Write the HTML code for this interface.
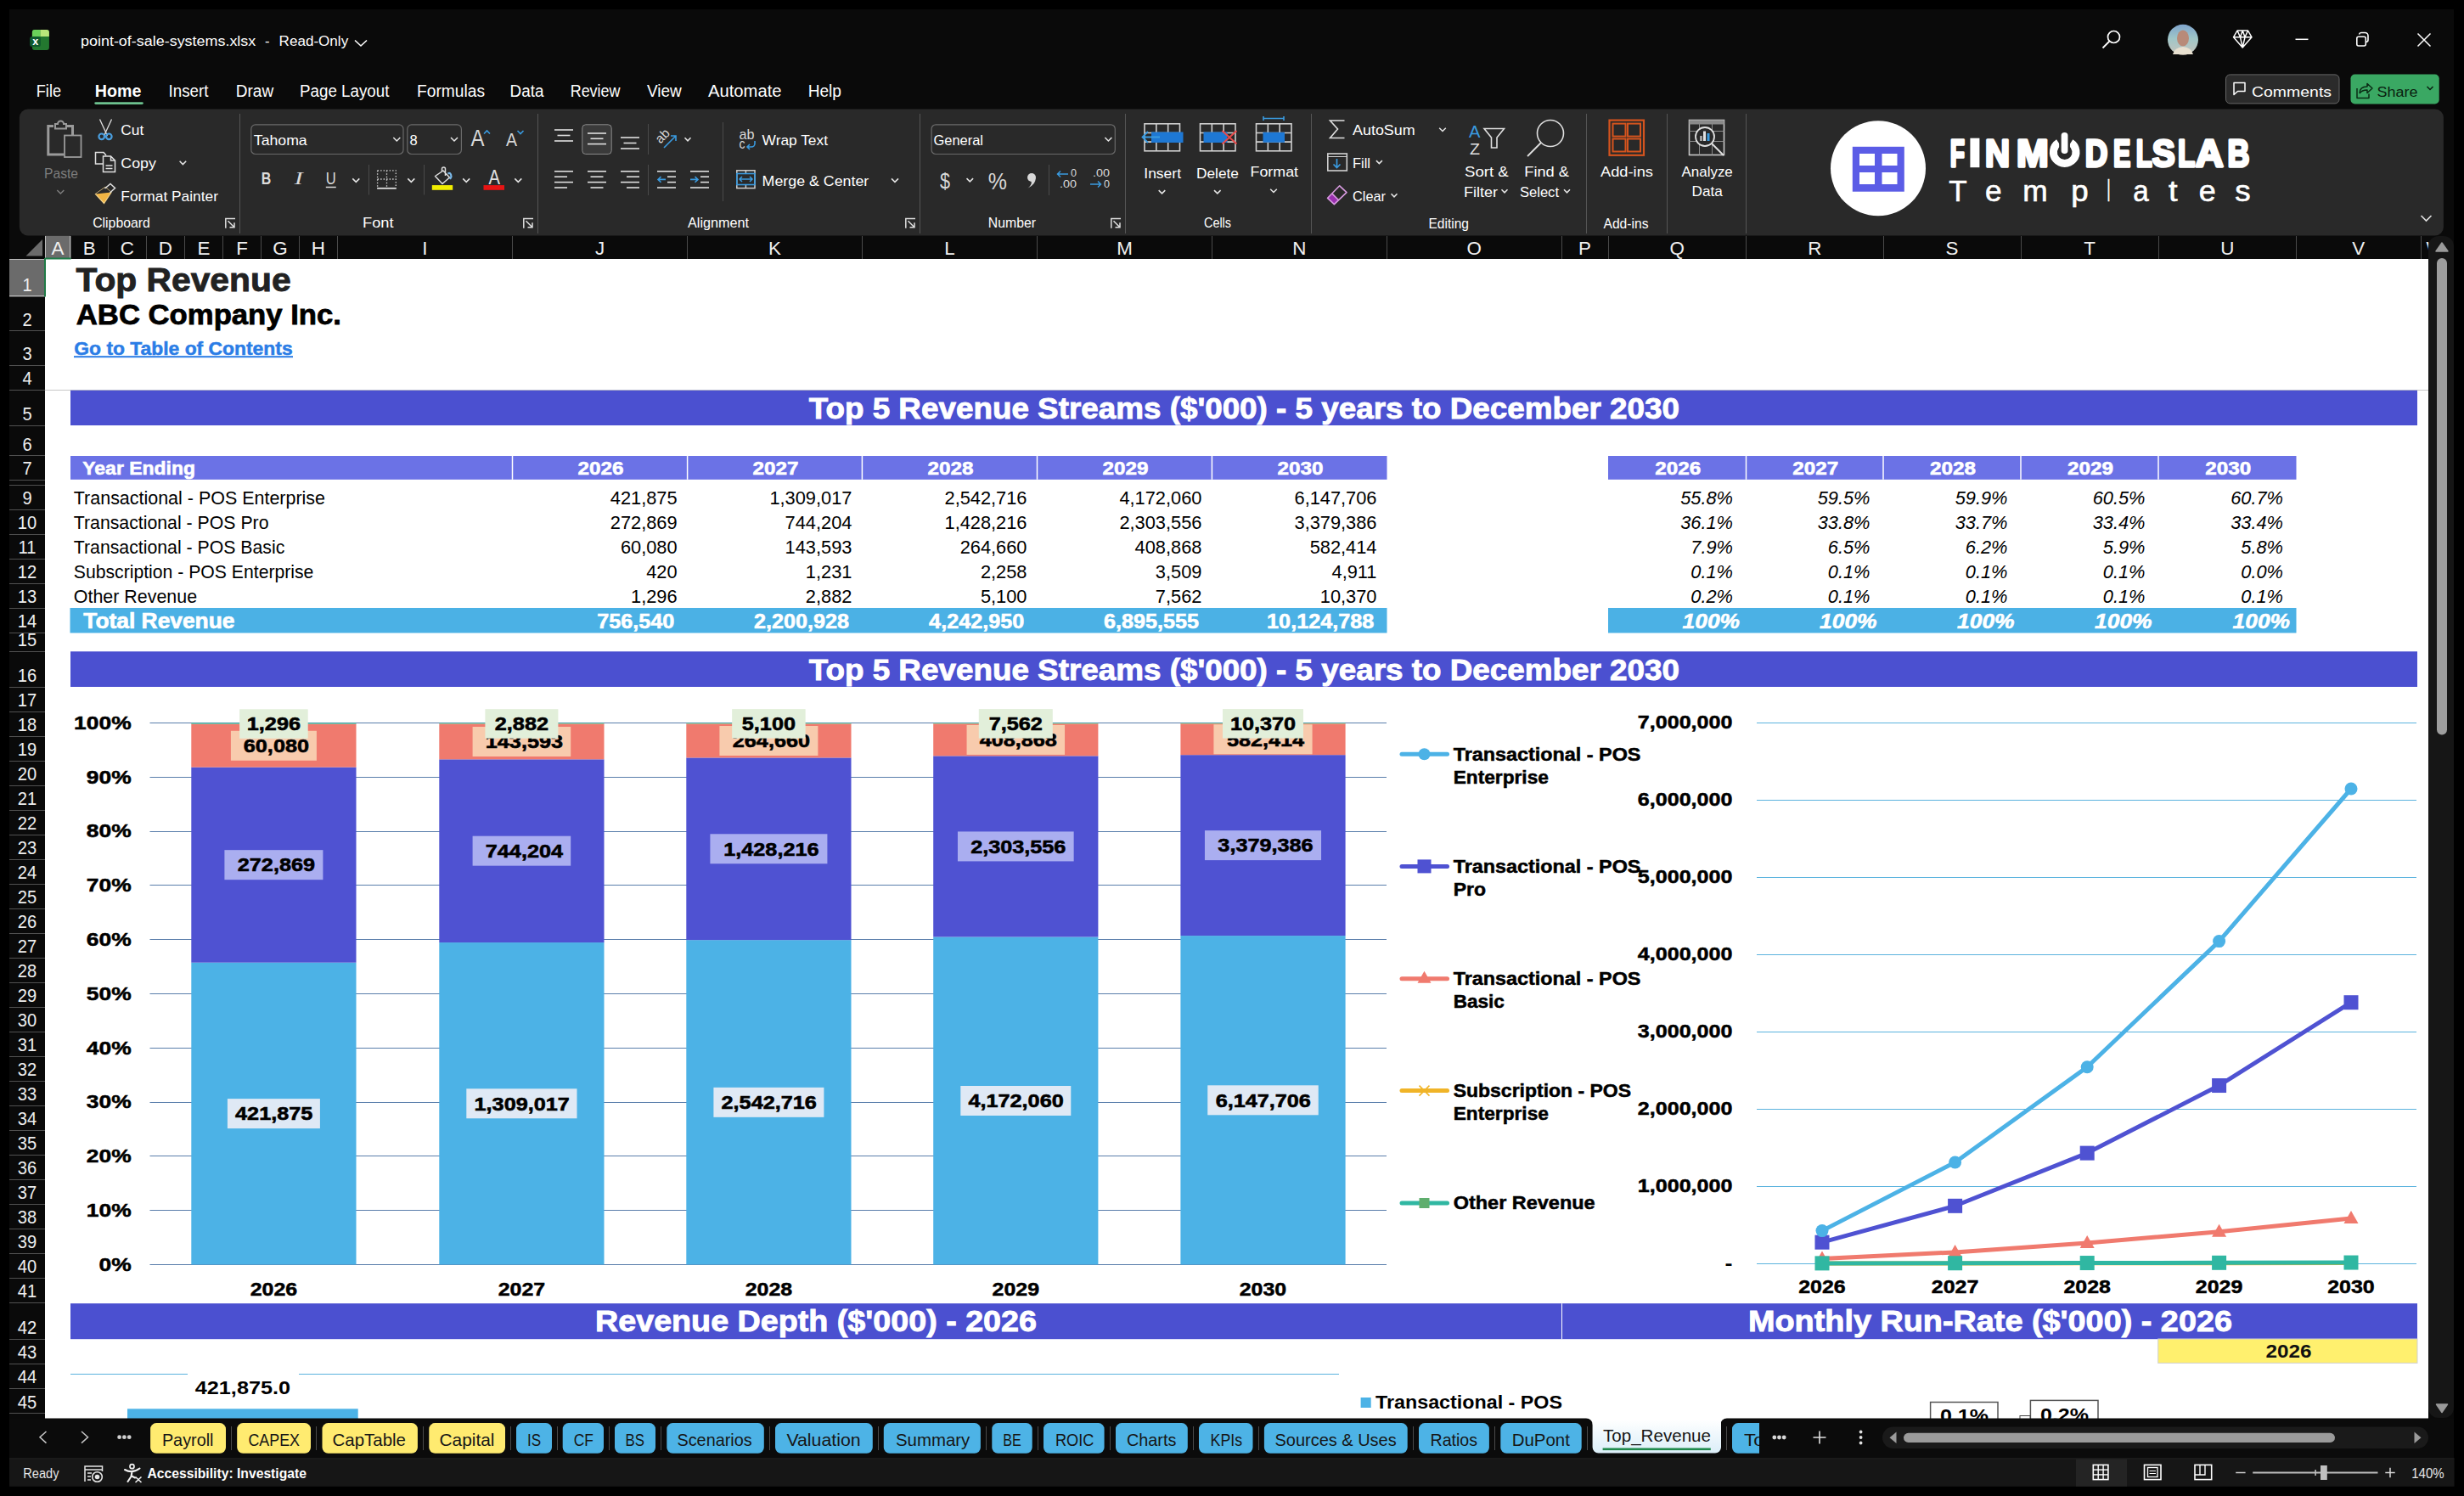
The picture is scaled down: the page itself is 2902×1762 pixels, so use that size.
<!DOCTYPE html><html><head><meta charset="utf-8"><style>html,body{margin:0;padding:0;background:#000;overflow:hidden}svg{display:block}text{font-family:"Liberation Sans",sans-serif;white-space:pre}</style></head><body>
<svg width="2902" height="1762" viewBox="0 0 2902 1762">
<rect x="0.00" y="0.00" width="2902.00" height="1762.00" fill="#000" />
<rect x="11.00" y="11.00" width="2879.00" height="1740.00" fill="#0a0a0a" />
<rect x="53.00" y="305.00" width="2807.00" height="1375.00" fill="#ffffff" />
<rect x="11.00" y="277.00" width="2849.00" height="28.00" fill="#0a0a0a" />
<polygon points="50,282 50,301.5 30.5,301.5" fill="#6b6b6b"/>
<rect x="53.00" y="277.50" width="30.00" height="27.50" fill="#6b6b6b" />
<line x1="83.50" y1="278.00" x2="83.50" y2="305.00" stroke="#4a4a4a" stroke-width="1" />
<text x="60.53" y="299.80" font-size="22.38" fill="#f0f0f0" >A</text>
<line x1="127.50" y1="278.00" x2="127.50" y2="305.00" stroke="#4a4a4a" stroke-width="1" />
<text x="97.68" y="299.80" font-size="22.38" fill="#f0f0f0" >B</text>
<line x1="172.50" y1="278.00" x2="172.50" y2="305.00" stroke="#4a4a4a" stroke-width="1" />
<text x="141.82" y="299.80" font-size="22.38" fill="#f0f0f0" >C</text>
<line x1="217.50" y1="278.00" x2="217.50" y2="305.00" stroke="#4a4a4a" stroke-width="1" />
<text x="186.82" y="299.80" font-size="22.38" fill="#f0f0f0" >D</text>
<line x1="262.50" y1="278.00" x2="262.50" y2="305.00" stroke="#4a4a4a" stroke-width="1" />
<text x="232.43" y="299.80" font-size="22.38" fill="#f0f0f0" >E</text>
<line x1="307.50" y1="278.00" x2="307.50" y2="305.00" stroke="#4a4a4a" stroke-width="1" />
<text x="278.21" y="299.80" font-size="22.38" fill="#f0f0f0" >F</text>
<line x1="352.50" y1="278.00" x2="352.50" y2="305.00" stroke="#4a4a4a" stroke-width="1" />
<text x="321.34" y="299.80" font-size="22.38" fill="#f0f0f0" >G</text>
<line x1="397.50" y1="278.00" x2="397.50" y2="305.00" stroke="#4a4a4a" stroke-width="1" />
<text x="366.82" y="299.80" font-size="22.38" fill="#f0f0f0" >H</text>
<line x1="603.50" y1="278.00" x2="603.50" y2="305.00" stroke="#4a4a4a" stroke-width="1" />
<text x="497.29" y="299.80" font-size="22.38" fill="#f0f0f0" >I</text>
<line x1="809.50" y1="278.00" x2="809.50" y2="305.00" stroke="#4a4a4a" stroke-width="1" />
<text x="700.95" y="299.80" font-size="22.38" fill="#f0f0f0" >J</text>
<line x1="1015.50" y1="278.00" x2="1015.50" y2="305.00" stroke="#4a4a4a" stroke-width="1" />
<text x="905.03" y="299.80" font-size="22.38" fill="#f0f0f0" >K</text>
<line x1="1221.50" y1="278.00" x2="1221.50" y2="305.00" stroke="#4a4a4a" stroke-width="1" />
<text x="1112.23" y="299.80" font-size="22.38" fill="#f0f0f0" >L</text>
<line x1="1427.50" y1="278.00" x2="1427.50" y2="305.00" stroke="#4a4a4a" stroke-width="1" />
<text x="1315.13" y="299.80" font-size="22.38" fill="#f0f0f0" >M</text>
<line x1="1633.50" y1="278.00" x2="1633.50" y2="305.00" stroke="#4a4a4a" stroke-width="1" />
<text x="1522.37" y="299.80" font-size="22.38" fill="#f0f0f0" >N</text>
<line x1="1839.50" y1="278.00" x2="1839.50" y2="305.00" stroke="#4a4a4a" stroke-width="1" />
<text x="1727.54" y="299.80" font-size="22.38" fill="#f0f0f0" >O</text>
<line x1="1894.50" y1="278.00" x2="1894.50" y2="305.00" stroke="#4a4a4a" stroke-width="1" />
<text x="1859.03" y="299.80" font-size="22.38" fill="#f0f0f0" >P</text>
<line x1="2056.50" y1="278.00" x2="2056.50" y2="305.00" stroke="#4a4a4a" stroke-width="1" />
<text x="1966.54" y="299.80" font-size="22.38" fill="#f0f0f0" >Q</text>
<line x1="2218.50" y1="278.00" x2="2218.50" y2="305.00" stroke="#4a4a4a" stroke-width="1" />
<text x="2129.17" y="299.80" font-size="22.38" fill="#f0f0f0" >R</text>
<line x1="2380.50" y1="278.00" x2="2380.50" y2="305.00" stroke="#4a4a4a" stroke-width="1" />
<text x="2291.53" y="299.80" font-size="22.38" fill="#f0f0f0" >S</text>
<line x1="2542.50" y1="278.00" x2="2542.50" y2="305.00" stroke="#4a4a4a" stroke-width="1" />
<text x="2454.16" y="299.80" font-size="22.38" fill="#f0f0f0" >T</text>
<line x1="2704.50" y1="278.00" x2="2704.50" y2="305.00" stroke="#4a4a4a" stroke-width="1" />
<text x="2615.17" y="299.80" font-size="22.38" fill="#f0f0f0" >U</text>
<line x1="2851.50" y1="278.00" x2="2851.50" y2="305.00" stroke="#4a4a4a" stroke-width="1" />
<text x="2770.28" y="299.80" font-size="22.38" fill="#f0f0f0" >V</text>
<text x="2857.44" y="299.80" font-size="22.38" fill="#f0f0f0" >W</text>
<line x1="53.50" y1="278.00" x2="53.50" y2="305.00" stroke="#bdbdbd" stroke-width="1" />
<line x1="82.50" y1="278.00" x2="82.50" y2="305.00" stroke="#bdbdbd" stroke-width="1" />
<rect x="11.00" y="305.00" width="42.00" height="1365.00" fill="#0a0a0a" />
<rect x="11.00" y="305.50" width="41.50" height="43.20" fill="#6b6b6b" />
<line x1="11.00" y1="349.50" x2="53.00" y2="349.50" stroke="#505050" stroke-width="1" />
<text x="26.40" y="343.00" font-size="22.38" fill="#eeeeee" textLength="11.20" lengthAdjust="spacingAndGlyphs" >1</text>
<line x1="11.00" y1="389.50" x2="53.00" y2="389.50" stroke="#505050" stroke-width="1" />
<text x="26.40" y="383.50" font-size="22.38" fill="#eeeeee" textLength="11.20" lengthAdjust="spacingAndGlyphs" >2</text>
<line x1="11.00" y1="430.50" x2="53.00" y2="430.50" stroke="#505050" stroke-width="1" />
<text x="26.40" y="424.40" font-size="22.38" fill="#eeeeee" textLength="11.20" lengthAdjust="spacingAndGlyphs" >3</text>
<line x1="11.00" y1="459.50" x2="53.00" y2="459.50" stroke="#505050" stroke-width="1" />
<text x="26.40" y="453.30" font-size="22.38" fill="#eeeeee" textLength="11.20" lengthAdjust="spacingAndGlyphs" >4</text>
<line x1="11.00" y1="501.50" x2="53.00" y2="501.50" stroke="#505050" stroke-width="1" />
<text x="26.40" y="495.40" font-size="22.38" fill="#eeeeee" textLength="11.20" lengthAdjust="spacingAndGlyphs" >5</text>
<line x1="11.00" y1="536.50" x2="53.00" y2="536.50" stroke="#505050" stroke-width="1" />
<text x="26.40" y="530.60" font-size="22.38" fill="#eeeeee" textLength="11.20" lengthAdjust="spacingAndGlyphs" >6</text>
<line x1="11.00" y1="565.50" x2="53.00" y2="565.50" stroke="#505050" stroke-width="1" />
<text x="26.40" y="559.00" font-size="22.38" fill="#eeeeee" textLength="11.20" lengthAdjust="spacingAndGlyphs" >7</text>
<line x1="11.00" y1="571.50" x2="53.00" y2="571.50" stroke="#505050" stroke-width="1" />
<line x1="11.00" y1="600.50" x2="53.00" y2="600.50" stroke="#505050" stroke-width="1" />
<text x="26.40" y="594.20" font-size="22.38" fill="#eeeeee" textLength="11.20" lengthAdjust="spacingAndGlyphs" >9</text>
<line x1="11.00" y1="629.50" x2="53.00" y2="629.50" stroke="#505050" stroke-width="1" />
<text x="20.80" y="623.00" font-size="22.38" fill="#eeeeee" textLength="22.41" lengthAdjust="spacingAndGlyphs" >10</text>
<line x1="11.00" y1="658.50" x2="53.00" y2="658.50" stroke="#505050" stroke-width="1" />
<text x="21.54" y="652.00" font-size="22.38" fill="#eeeeee" textLength="20.91" lengthAdjust="spacingAndGlyphs" >11</text>
<line x1="11.00" y1="687.50" x2="53.00" y2="687.50" stroke="#505050" stroke-width="1" />
<text x="20.80" y="681.30" font-size="22.38" fill="#eeeeee" textLength="22.41" lengthAdjust="spacingAndGlyphs" >12</text>
<line x1="11.00" y1="716.50" x2="53.00" y2="716.50" stroke="#505050" stroke-width="1" />
<text x="20.80" y="710.00" font-size="22.38" fill="#eeeeee" textLength="22.41" lengthAdjust="spacingAndGlyphs" >13</text>
<line x1="11.00" y1="745.50" x2="53.00" y2="745.50" stroke="#505050" stroke-width="1" />
<text x="20.80" y="739.00" font-size="22.38" fill="#eeeeee" textLength="22.41" lengthAdjust="spacingAndGlyphs" >14</text>
<line x1="11.00" y1="767.50" x2="53.00" y2="767.50" stroke="#505050" stroke-width="1" />
<text x="20.80" y="761.30" font-size="22.38" fill="#eeeeee" textLength="22.41" lengthAdjust="spacingAndGlyphs" >15</text>
<line x1="11.00" y1="809.50" x2="53.00" y2="809.50" stroke="#505050" stroke-width="1" />
<text x="20.80" y="803.00" font-size="22.38" fill="#eeeeee" textLength="22.41" lengthAdjust="spacingAndGlyphs" >16</text>
<line x1="11.00" y1="838.50" x2="53.00" y2="838.50" stroke="#505050" stroke-width="1" />
<text x="20.80" y="832.00" font-size="22.38" fill="#eeeeee" textLength="22.41" lengthAdjust="spacingAndGlyphs" >17</text>
<line x1="11.00" y1="867.50" x2="53.00" y2="867.50" stroke="#505050" stroke-width="1" />
<text x="20.80" y="861.00" font-size="22.38" fill="#eeeeee" textLength="22.41" lengthAdjust="spacingAndGlyphs" >18</text>
<line x1="11.00" y1="896.50" x2="53.00" y2="896.50" stroke="#505050" stroke-width="1" />
<text x="20.80" y="890.00" font-size="22.38" fill="#eeeeee" textLength="22.41" lengthAdjust="spacingAndGlyphs" >19</text>
<line x1="11.00" y1="925.50" x2="53.00" y2="925.50" stroke="#505050" stroke-width="1" />
<text x="20.80" y="919.00" font-size="22.38" fill="#eeeeee" textLength="22.41" lengthAdjust="spacingAndGlyphs" >20</text>
<line x1="11.00" y1="954.50" x2="53.00" y2="954.50" stroke="#505050" stroke-width="1" />
<text x="20.80" y="948.00" font-size="22.38" fill="#eeeeee" textLength="22.41" lengthAdjust="spacingAndGlyphs" >21</text>
<line x1="11.00" y1="983.50" x2="53.00" y2="983.50" stroke="#505050" stroke-width="1" />
<text x="20.80" y="977.00" font-size="22.38" fill="#eeeeee" textLength="22.41" lengthAdjust="spacingAndGlyphs" >22</text>
<line x1="11.00" y1="1012.50" x2="53.00" y2="1012.50" stroke="#505050" stroke-width="1" />
<text x="20.80" y="1006.00" font-size="22.38" fill="#eeeeee" textLength="22.41" lengthAdjust="spacingAndGlyphs" >23</text>
<line x1="11.00" y1="1041.50" x2="53.00" y2="1041.50" stroke="#505050" stroke-width="1" />
<text x="20.80" y="1035.00" font-size="22.38" fill="#eeeeee" textLength="22.41" lengthAdjust="spacingAndGlyphs" >24</text>
<line x1="11.00" y1="1070.50" x2="53.00" y2="1070.50" stroke="#505050" stroke-width="1" />
<text x="20.80" y="1064.00" font-size="22.38" fill="#eeeeee" textLength="22.41" lengthAdjust="spacingAndGlyphs" >25</text>
<line x1="11.00" y1="1099.50" x2="53.00" y2="1099.50" stroke="#505050" stroke-width="1" />
<text x="20.80" y="1093.00" font-size="22.38" fill="#eeeeee" textLength="22.41" lengthAdjust="spacingAndGlyphs" >26</text>
<line x1="11.00" y1="1128.50" x2="53.00" y2="1128.50" stroke="#505050" stroke-width="1" />
<text x="20.80" y="1122.00" font-size="22.38" fill="#eeeeee" textLength="22.41" lengthAdjust="spacingAndGlyphs" >27</text>
<line x1="11.00" y1="1157.50" x2="53.00" y2="1157.50" stroke="#505050" stroke-width="1" />
<text x="20.80" y="1151.00" font-size="22.38" fill="#eeeeee" textLength="22.41" lengthAdjust="spacingAndGlyphs" >28</text>
<line x1="11.00" y1="1186.50" x2="53.00" y2="1186.50" stroke="#505050" stroke-width="1" />
<text x="20.80" y="1180.00" font-size="22.38" fill="#eeeeee" textLength="22.41" lengthAdjust="spacingAndGlyphs" >29</text>
<line x1="11.00" y1="1215.50" x2="53.00" y2="1215.50" stroke="#505050" stroke-width="1" />
<text x="20.80" y="1209.00" font-size="22.38" fill="#eeeeee" textLength="22.41" lengthAdjust="spacingAndGlyphs" >30</text>
<line x1="11.00" y1="1244.50" x2="53.00" y2="1244.50" stroke="#505050" stroke-width="1" />
<text x="20.80" y="1238.00" font-size="22.38" fill="#eeeeee" textLength="22.41" lengthAdjust="spacingAndGlyphs" >31</text>
<line x1="11.00" y1="1273.50" x2="53.00" y2="1273.50" stroke="#505050" stroke-width="1" />
<text x="20.80" y="1267.00" font-size="22.38" fill="#eeeeee" textLength="22.41" lengthAdjust="spacingAndGlyphs" >32</text>
<line x1="11.00" y1="1302.50" x2="53.00" y2="1302.50" stroke="#505050" stroke-width="1" />
<text x="20.80" y="1296.00" font-size="22.38" fill="#eeeeee" textLength="22.41" lengthAdjust="spacingAndGlyphs" >33</text>
<line x1="11.00" y1="1331.50" x2="53.00" y2="1331.50" stroke="#505050" stroke-width="1" />
<text x="20.80" y="1325.00" font-size="22.38" fill="#eeeeee" textLength="22.41" lengthAdjust="spacingAndGlyphs" >34</text>
<line x1="11.00" y1="1360.50" x2="53.00" y2="1360.50" stroke="#505050" stroke-width="1" />
<text x="20.80" y="1354.00" font-size="22.38" fill="#eeeeee" textLength="22.41" lengthAdjust="spacingAndGlyphs" >35</text>
<line x1="11.00" y1="1389.50" x2="53.00" y2="1389.50" stroke="#505050" stroke-width="1" />
<text x="20.80" y="1383.00" font-size="22.38" fill="#eeeeee" textLength="22.41" lengthAdjust="spacingAndGlyphs" >36</text>
<line x1="11.00" y1="1418.50" x2="53.00" y2="1418.50" stroke="#505050" stroke-width="1" />
<text x="20.80" y="1412.00" font-size="22.38" fill="#eeeeee" textLength="22.41" lengthAdjust="spacingAndGlyphs" >37</text>
<line x1="11.00" y1="1447.50" x2="53.00" y2="1447.50" stroke="#505050" stroke-width="1" />
<text x="20.80" y="1441.00" font-size="22.38" fill="#eeeeee" textLength="22.41" lengthAdjust="spacingAndGlyphs" >38</text>
<line x1="11.00" y1="1476.50" x2="53.00" y2="1476.50" stroke="#505050" stroke-width="1" />
<text x="20.80" y="1470.00" font-size="22.38" fill="#eeeeee" textLength="22.41" lengthAdjust="spacingAndGlyphs" >39</text>
<line x1="11.00" y1="1505.50" x2="53.00" y2="1505.50" stroke="#505050" stroke-width="1" />
<text x="20.80" y="1499.00" font-size="22.38" fill="#eeeeee" textLength="22.41" lengthAdjust="spacingAndGlyphs" >40</text>
<line x1="11.00" y1="1534.50" x2="53.00" y2="1534.50" stroke="#505050" stroke-width="1" />
<text x="20.80" y="1528.00" font-size="22.38" fill="#eeeeee" textLength="22.41" lengthAdjust="spacingAndGlyphs" >41</text>
<line x1="11.00" y1="1577.50" x2="53.00" y2="1577.50" stroke="#505050" stroke-width="1" />
<text x="20.80" y="1571.00" font-size="22.38" fill="#eeeeee" textLength="22.41" lengthAdjust="spacingAndGlyphs" >42</text>
<line x1="11.00" y1="1606.50" x2="53.00" y2="1606.50" stroke="#505050" stroke-width="1" />
<text x="20.80" y="1600.00" font-size="22.38" fill="#eeeeee" textLength="22.41" lengthAdjust="spacingAndGlyphs" >43</text>
<line x1="11.00" y1="1635.50" x2="53.00" y2="1635.50" stroke="#505050" stroke-width="1" />
<text x="20.80" y="1629.00" font-size="22.38" fill="#eeeeee" textLength="22.41" lengthAdjust="spacingAndGlyphs" >44</text>
<line x1="11.00" y1="1664.50" x2="53.00" y2="1664.50" stroke="#505050" stroke-width="1" />
<text x="20.80" y="1658.50" font-size="22.38" fill="#eeeeee" textLength="22.41" lengthAdjust="spacingAndGlyphs" >45</text>
<line x1="11.00" y1="305.50" x2="53.00" y2="305.50" stroke="#bdbdbd" stroke-width="1" />
<line x1="11.00" y1="348.50" x2="53.00" y2="348.50" stroke="#bdbdbd" stroke-width="1" />
<line x1="53.00" y1="304.50" x2="83.50" y2="304.50" stroke="#1f7a47" stroke-width="2" />
<line x1="53.00" y1="304.00" x2="53.00" y2="349.50" stroke="#1f7a47" stroke-width="2" />
<line x1="53.00" y1="459.50" x2="2860.00" y2="459.50" stroke="#c7c7c7" stroke-width="1" />
<text x="89.50" y="342.70" font-size="39.68" fill="#222222" font-weight="bold" textLength="253.08" lengthAdjust="spacingAndGlyphs" stroke="#222222" stroke-width="0.9" >Top Revenue</text>
<text x="89.80" y="381.90" font-size="34.01" fill="#000000" font-weight="bold" textLength="312.20" lengthAdjust="spacingAndGlyphs" stroke="#000000" stroke-width="0.8" >ABC Company Inc.</text>
<text x="87.30" y="417.70" font-size="21.95" fill="#2b7de6" font-weight="bold" textLength="257.31" lengthAdjust="spacingAndGlyphs" stroke="#2b7de6" stroke-width="0.5" >Go to Table of Contents</text>
<rect x="87.00" y="419.20" width="258.00" height="2.00" fill="#2b7de6" />
<rect x="83.00" y="459.80" width="2764.00" height="41.20" fill="#4b50d0" />
<text x="952.70" y="492.60" font-size="34.59" fill="#fff" font-weight="bold" textLength="1025.30" lengthAdjust="spacingAndGlyphs" stroke="#fff" stroke-width="0.9" >Top 5 Revenue Streams ($'000) - 5 years to December 2030</text>
<rect x="83.00" y="537.00" width="1550.50" height="27.80" fill="#6b72e6" />
<line x1="603.50" y1="537.00" x2="603.50" y2="564.80" stroke="#ffffff" stroke-width="1.5" />
<line x1="809.60" y1="537.00" x2="809.60" y2="564.80" stroke="#ffffff" stroke-width="1.5" />
<line x1="1015.40" y1="537.00" x2="1015.40" y2="564.80" stroke="#ffffff" stroke-width="1.5" />
<line x1="1221.50" y1="537.00" x2="1221.50" y2="564.80" stroke="#ffffff" stroke-width="1.5" />
<line x1="1427.40" y1="537.00" x2="1427.40" y2="564.80" stroke="#ffffff" stroke-width="1.5" />
<text x="97.30" y="559.40" font-size="22.67" fill="#fff" font-weight="bold" textLength="132.71" lengthAdjust="spacingAndGlyphs" stroke="#fff" stroke-width="0.6" >Year Ending</text>
<text x="680.55" y="559.40" font-size="22.67" fill="#fff" font-weight="bold" textLength="54.00" lengthAdjust="spacingAndGlyphs" stroke="#fff" stroke-width="0.6" >2026</text>
<text x="886.50" y="559.40" font-size="22.67" fill="#fff" font-weight="bold" textLength="54.00" lengthAdjust="spacingAndGlyphs" stroke="#fff" stroke-width="0.6" >2027</text>
<text x="1092.45" y="559.40" font-size="22.67" fill="#fff" font-weight="bold" textLength="54.00" lengthAdjust="spacingAndGlyphs" stroke="#fff" stroke-width="0.6" >2028</text>
<text x="1298.45" y="559.40" font-size="22.67" fill="#fff" font-weight="bold" textLength="54.00" lengthAdjust="spacingAndGlyphs" stroke="#fff" stroke-width="0.6" >2029</text>
<text x="1504.45" y="559.40" font-size="22.67" fill="#fff" font-weight="bold" textLength="54.00" lengthAdjust="spacingAndGlyphs" stroke="#fff" stroke-width="0.6" >2030</text>
<rect x="1894.00" y="537.00" width="810.50" height="27.80" fill="#6b72e6" />
<line x1="2056.50" y1="537.00" x2="2056.50" y2="564.80" stroke="#ffffff" stroke-width="1.5" />
<line x1="2218.00" y1="537.00" x2="2218.00" y2="564.80" stroke="#ffffff" stroke-width="1.5" />
<line x1="2380.00" y1="537.00" x2="2380.00" y2="564.80" stroke="#ffffff" stroke-width="1.5" />
<line x1="2542.00" y1="537.00" x2="2542.00" y2="564.80" stroke="#ffffff" stroke-width="1.5" />
<text x="1949.25" y="558.80" font-size="22.67" fill="#fff" font-weight="bold" textLength="54.00" lengthAdjust="spacingAndGlyphs" stroke="#fff" stroke-width="0.6" >2026</text>
<text x="2111.25" y="558.80" font-size="22.67" fill="#fff" font-weight="bold" textLength="54.00" lengthAdjust="spacingAndGlyphs" stroke="#fff" stroke-width="0.6" >2027</text>
<text x="2273.00" y="558.80" font-size="22.67" fill="#fff" font-weight="bold" textLength="54.00" lengthAdjust="spacingAndGlyphs" stroke="#fff" stroke-width="0.6" >2028</text>
<text x="2435.00" y="558.80" font-size="22.67" fill="#fff" font-weight="bold" textLength="54.00" lengthAdjust="spacingAndGlyphs" stroke="#fff" stroke-width="0.6" >2029</text>
<text x="2597.25" y="558.80" font-size="22.67" fill="#fff" font-weight="bold" textLength="54.00" lengthAdjust="spacingAndGlyphs" stroke="#fff" stroke-width="0.6" >2030</text>
<text x="86.80" y="593.80" font-size="22.38" fill="#000" textLength="296.20" lengthAdjust="spacingAndGlyphs" >Transactional - POS Enterprise</text>
<text x="718.80" y="593.80" font-size="21.80" fill="#000" textLength="78.80" lengthAdjust="spacingAndGlyphs" >421,875</text>
<text x="906.42" y="593.80" font-size="21.80" fill="#000" textLength="96.98" lengthAdjust="spacingAndGlyphs" >1,309,017</text>
<text x="1112.52" y="593.80" font-size="21.80" fill="#000" textLength="96.98" lengthAdjust="spacingAndGlyphs" >2,542,716</text>
<text x="1318.42" y="593.80" font-size="21.80" fill="#000" textLength="96.98" lengthAdjust="spacingAndGlyphs" >4,172,060</text>
<text x="1524.52" y="593.80" font-size="21.80" fill="#000" textLength="96.98" lengthAdjust="spacingAndGlyphs" >6,147,706</text>
<text x="1979.18" y="594.30" font-size="21.80" fill="#000" font-style="italic" textLength="61.82" lengthAdjust="spacingAndGlyphs" >55.8%</text>
<text x="2140.68" y="594.30" font-size="21.80" fill="#000" font-style="italic" textLength="61.82" lengthAdjust="spacingAndGlyphs" >59.5%</text>
<text x="2302.68" y="594.30" font-size="21.80" fill="#000" font-style="italic" textLength="61.82" lengthAdjust="spacingAndGlyphs" >59.9%</text>
<text x="2464.68" y="594.30" font-size="21.80" fill="#000" font-style="italic" textLength="61.82" lengthAdjust="spacingAndGlyphs" >60.5%</text>
<text x="2627.18" y="594.30" font-size="21.80" fill="#000" font-style="italic" textLength="61.82" lengthAdjust="spacingAndGlyphs" >60.7%</text>
<text x="86.80" y="622.75" font-size="22.38" fill="#000" textLength="229.71" lengthAdjust="spacingAndGlyphs" >Transactional - POS Pro</text>
<text x="718.80" y="622.75" font-size="21.80" fill="#000" textLength="78.80" lengthAdjust="spacingAndGlyphs" >272,869</text>
<text x="924.60" y="622.75" font-size="21.80" fill="#000" textLength="78.80" lengthAdjust="spacingAndGlyphs" >744,204</text>
<text x="1112.52" y="622.75" font-size="21.80" fill="#000" textLength="96.98" lengthAdjust="spacingAndGlyphs" >1,428,216</text>
<text x="1318.42" y="622.75" font-size="21.80" fill="#000" textLength="96.98" lengthAdjust="spacingAndGlyphs" >2,303,556</text>
<text x="1524.52" y="622.75" font-size="21.80" fill="#000" textLength="96.98" lengthAdjust="spacingAndGlyphs" >3,379,386</text>
<text x="1979.18" y="623.25" font-size="21.80" fill="#000" font-style="italic" textLength="61.82" lengthAdjust="spacingAndGlyphs" >36.1%</text>
<text x="2140.68" y="623.25" font-size="21.80" fill="#000" font-style="italic" textLength="61.82" lengthAdjust="spacingAndGlyphs" >33.8%</text>
<text x="2302.68" y="623.25" font-size="21.80" fill="#000" font-style="italic" textLength="61.82" lengthAdjust="spacingAndGlyphs" >33.7%</text>
<text x="2464.68" y="623.25" font-size="21.80" fill="#000" font-style="italic" textLength="61.82" lengthAdjust="spacingAndGlyphs" >33.4%</text>
<text x="2627.18" y="623.25" font-size="21.80" fill="#000" font-style="italic" textLength="61.82" lengthAdjust="spacingAndGlyphs" >33.4%</text>
<text x="86.80" y="651.70" font-size="22.38" fill="#000" textLength="248.49" lengthAdjust="spacingAndGlyphs" >Transactional - POS Basic</text>
<text x="730.92" y="651.70" font-size="21.80" fill="#000" textLength="66.68" lengthAdjust="spacingAndGlyphs" >60,080</text>
<text x="924.60" y="651.70" font-size="21.80" fill="#000" textLength="78.80" lengthAdjust="spacingAndGlyphs" >143,593</text>
<text x="1130.70" y="651.70" font-size="21.80" fill="#000" textLength="78.80" lengthAdjust="spacingAndGlyphs" >264,660</text>
<text x="1336.60" y="651.70" font-size="21.80" fill="#000" textLength="78.80" lengthAdjust="spacingAndGlyphs" >408,868</text>
<text x="1542.70" y="651.70" font-size="21.80" fill="#000" textLength="78.80" lengthAdjust="spacingAndGlyphs" >582,414</text>
<text x="1991.31" y="652.20" font-size="21.80" fill="#000" font-style="italic" textLength="49.69" lengthAdjust="spacingAndGlyphs" >7.9%</text>
<text x="2152.81" y="652.20" font-size="21.80" fill="#000" font-style="italic" textLength="49.69" lengthAdjust="spacingAndGlyphs" >6.5%</text>
<text x="2314.81" y="652.20" font-size="21.80" fill="#000" font-style="italic" textLength="49.69" lengthAdjust="spacingAndGlyphs" >6.2%</text>
<text x="2476.81" y="652.20" font-size="21.80" fill="#000" font-style="italic" textLength="49.69" lengthAdjust="spacingAndGlyphs" >5.9%</text>
<text x="2639.31" y="652.20" font-size="21.80" fill="#000" font-style="italic" textLength="49.69" lengthAdjust="spacingAndGlyphs" >5.8%</text>
<text x="86.80" y="680.65" font-size="22.38" fill="#000" textLength="282.60" lengthAdjust="spacingAndGlyphs" >Subscription - POS Enterprise</text>
<text x="761.23" y="680.65" font-size="21.80" fill="#000" textLength="36.37" lengthAdjust="spacingAndGlyphs" >420</text>
<text x="948.85" y="680.65" font-size="21.80" fill="#000" textLength="54.55" lengthAdjust="spacingAndGlyphs" >1,231</text>
<text x="1154.95" y="680.65" font-size="21.80" fill="#000" textLength="54.55" lengthAdjust="spacingAndGlyphs" >2,258</text>
<text x="1360.85" y="680.65" font-size="21.80" fill="#000" textLength="54.55" lengthAdjust="spacingAndGlyphs" >3,509</text>
<text x="1568.56" y="680.65" font-size="21.80" fill="#000" textLength="52.94" lengthAdjust="spacingAndGlyphs" >4,911</text>
<text x="1991.31" y="681.15" font-size="21.80" fill="#000" font-style="italic" textLength="49.69" lengthAdjust="spacingAndGlyphs" >0.1%</text>
<text x="2152.81" y="681.15" font-size="21.80" fill="#000" font-style="italic" textLength="49.69" lengthAdjust="spacingAndGlyphs" >0.1%</text>
<text x="2314.81" y="681.15" font-size="21.80" fill="#000" font-style="italic" textLength="49.69" lengthAdjust="spacingAndGlyphs" >0.1%</text>
<text x="2476.81" y="681.15" font-size="21.80" fill="#000" font-style="italic" textLength="49.69" lengthAdjust="spacingAndGlyphs" >0.1%</text>
<text x="2639.31" y="681.15" font-size="21.80" fill="#000" font-style="italic" textLength="49.69" lengthAdjust="spacingAndGlyphs" >0.0%</text>
<text x="86.80" y="709.60" font-size="22.38" fill="#000" textLength="145.29" lengthAdjust="spacingAndGlyphs" >Other Revenue</text>
<text x="743.05" y="709.60" font-size="21.80" fill="#000" textLength="54.55" lengthAdjust="spacingAndGlyphs" >1,296</text>
<text x="948.85" y="709.60" font-size="21.80" fill="#000" textLength="54.55" lengthAdjust="spacingAndGlyphs" >2,882</text>
<text x="1154.95" y="709.60" font-size="21.80" fill="#000" textLength="54.55" lengthAdjust="spacingAndGlyphs" >5,100</text>
<text x="1360.85" y="709.60" font-size="21.80" fill="#000" textLength="54.55" lengthAdjust="spacingAndGlyphs" >7,562</text>
<text x="1554.82" y="709.60" font-size="21.80" fill="#000" textLength="66.68" lengthAdjust="spacingAndGlyphs" >10,370</text>
<text x="1991.31" y="710.10" font-size="21.80" fill="#000" font-style="italic" textLength="49.69" lengthAdjust="spacingAndGlyphs" >0.2%</text>
<text x="2152.81" y="710.10" font-size="21.80" fill="#000" font-style="italic" textLength="49.69" lengthAdjust="spacingAndGlyphs" >0.1%</text>
<text x="2314.81" y="710.10" font-size="21.80" fill="#000" font-style="italic" textLength="49.69" lengthAdjust="spacingAndGlyphs" >0.1%</text>
<text x="2476.81" y="710.10" font-size="21.80" fill="#000" font-style="italic" textLength="49.69" lengthAdjust="spacingAndGlyphs" >0.1%</text>
<text x="2639.31" y="710.10" font-size="21.80" fill="#000" font-style="italic" textLength="49.69" lengthAdjust="spacingAndGlyphs" >0.1%</text>
<rect x="82.50" y="716.00" width="1551.00" height="29.50" fill="#4bb1e5" />
<text x="98.30" y="740.00" font-size="25.58" fill="#fff" font-weight="bold" textLength="178.19" lengthAdjust="spacingAndGlyphs" stroke="#fff" stroke-width="0.7" >Total Revenue</text>
<text x="703.24" y="740.00" font-size="23.55" fill="#fff" font-weight="bold" textLength="91.06" lengthAdjust="spacingAndGlyphs" stroke="#fff" stroke-width="0.6" >756,540</text>
<text x="888.03" y="740.00" font-size="23.55" fill="#fff" font-weight="bold" textLength="112.07" lengthAdjust="spacingAndGlyphs" stroke="#fff" stroke-width="0.6" >2,200,928</text>
<text x="1094.13" y="740.00" font-size="23.55" fill="#fff" font-weight="bold" textLength="112.07" lengthAdjust="spacingAndGlyphs" stroke="#fff" stroke-width="0.6" >4,242,950</text>
<text x="1300.03" y="740.00" font-size="23.55" fill="#fff" font-weight="bold" textLength="112.07" lengthAdjust="spacingAndGlyphs" stroke="#fff" stroke-width="0.6" >6,895,555</text>
<text x="1492.12" y="740.00" font-size="23.55" fill="#fff" font-weight="bold" textLength="126.08" lengthAdjust="spacingAndGlyphs" stroke="#fff" stroke-width="0.6" >10,124,788</text>
<rect x="1894.00" y="716.00" width="810.50" height="29.50" fill="#4bb1e5" />
<text x="1981.50" y="739.60" font-size="23.55" fill="#fff" font-weight="bold" font-style="italic" textLength="67.60" lengthAdjust="spacingAndGlyphs" stroke="#fff" stroke-width="0.6" >100%</text>
<text x="2143.00" y="739.60" font-size="23.55" fill="#fff" font-weight="bold" font-style="italic" textLength="67.60" lengthAdjust="spacingAndGlyphs" stroke="#fff" stroke-width="0.6" >100%</text>
<text x="2305.00" y="739.60" font-size="23.55" fill="#fff" font-weight="bold" font-style="italic" textLength="67.60" lengthAdjust="spacingAndGlyphs" stroke="#fff" stroke-width="0.6" >100%</text>
<text x="2467.00" y="739.60" font-size="23.55" fill="#fff" font-weight="bold" font-style="italic" textLength="67.60" lengthAdjust="spacingAndGlyphs" stroke="#fff" stroke-width="0.6" >100%</text>
<text x="2629.50" y="739.60" font-size="23.55" fill="#fff" font-weight="bold" font-style="italic" textLength="67.60" lengthAdjust="spacingAndGlyphs" stroke="#fff" stroke-width="0.6" >100%</text>
<rect x="83.00" y="767.30" width="2764.00" height="41.70" fill="#4b50d0" />
<text x="952.70" y="800.90" font-size="34.59" fill="#fff" font-weight="bold" textLength="1025.30" lengthAdjust="spacingAndGlyphs" stroke="#fff" stroke-width="0.9" >Top 5 Revenue Streams ($'000) - 5 years to December 2030</text>
<rect x="83.00" y="1535.20" width="2764.00" height="42.00" fill="#4b50d0" />
<line x1="1839.50" y1="1535.20" x2="1839.50" y2="1577.20" stroke="#ffffff" stroke-width="1" />
<text x="701.00" y="1568.00" font-size="34.59" fill="#fff" font-weight="bold" textLength="520.00" lengthAdjust="spacingAndGlyphs" stroke="#fff" stroke-width="0.9" >Revenue Depth ($'000) - 2026</text>
<text x="2059.00" y="1568.00" font-size="34.59" fill="#fff" font-weight="bold" textLength="570.00" lengthAdjust="spacingAndGlyphs" stroke="#fff" stroke-width="0.9" >Monthly Run-Rate ($'000) - 2026</text>
<rect x="2541.70" y="1577.00" width="305.30" height="28.40" fill="#fff06e" stroke="#d0d0d0" stroke-width="1"/>
<text x="2668.40" y="1598.50" font-size="22.67" fill="#111" font-weight="bold" textLength="54.00" lengthAdjust="spacingAndGlyphs" >2026</text>
<line x1="176.50" y1="1489.50" x2="1633.00" y2="1489.50" stroke="#5a7eab" stroke-width="1" />
<text x="116.47" y="1496.70" font-size="21.80" fill="#000" font-weight="bold" textLength="38.13" lengthAdjust="spacingAndGlyphs" stroke="#000" stroke-width="0.5" >0%</text>
<line x1="176.50" y1="1425.50" x2="1633.00" y2="1425.50" stroke="#5a7eab" stroke-width="1" />
<text x="101.80" y="1432.90" font-size="21.80" fill="#000" font-weight="bold" textLength="52.80" lengthAdjust="spacingAndGlyphs" stroke="#000" stroke-width="0.5" >10%</text>
<line x1="176.50" y1="1361.50" x2="1633.00" y2="1361.50" stroke="#5a7eab" stroke-width="1" />
<text x="101.80" y="1369.10" font-size="21.80" fill="#000" font-weight="bold" textLength="52.80" lengthAdjust="spacingAndGlyphs" stroke="#000" stroke-width="0.5" >20%</text>
<line x1="176.50" y1="1298.50" x2="1633.00" y2="1298.50" stroke="#5a7eab" stroke-width="1" />
<text x="101.80" y="1305.30" font-size="21.80" fill="#000" font-weight="bold" textLength="52.80" lengthAdjust="spacingAndGlyphs" stroke="#000" stroke-width="0.5" >30%</text>
<line x1="176.50" y1="1234.50" x2="1633.00" y2="1234.50" stroke="#5a7eab" stroke-width="1" />
<text x="101.80" y="1241.50" font-size="21.80" fill="#000" font-weight="bold" textLength="52.80" lengthAdjust="spacingAndGlyphs" stroke="#000" stroke-width="0.5" >40%</text>
<line x1="176.50" y1="1170.50" x2="1633.00" y2="1170.50" stroke="#5a7eab" stroke-width="1" />
<text x="101.80" y="1177.70" font-size="21.80" fill="#000" font-weight="bold" textLength="52.80" lengthAdjust="spacingAndGlyphs" stroke="#000" stroke-width="0.5" >50%</text>
<line x1="176.50" y1="1106.50" x2="1633.00" y2="1106.50" stroke="#5a7eab" stroke-width="1" />
<text x="101.80" y="1113.90" font-size="21.80" fill="#000" font-weight="bold" textLength="52.80" lengthAdjust="spacingAndGlyphs" stroke="#000" stroke-width="0.5" >60%</text>
<line x1="176.50" y1="1042.50" x2="1633.00" y2="1042.50" stroke="#5a7eab" stroke-width="1" />
<text x="101.80" y="1050.10" font-size="21.80" fill="#000" font-weight="bold" textLength="52.80" lengthAdjust="spacingAndGlyphs" stroke="#000" stroke-width="0.5" >70%</text>
<line x1="176.50" y1="979.50" x2="1633.00" y2="979.50" stroke="#5a7eab" stroke-width="1" />
<text x="101.80" y="986.30" font-size="21.80" fill="#000" font-weight="bold" textLength="52.80" lengthAdjust="spacingAndGlyphs" stroke="#000" stroke-width="0.5" >80%</text>
<line x1="176.50" y1="915.50" x2="1633.00" y2="915.50" stroke="#5a7eab" stroke-width="1" />
<text x="101.80" y="922.50" font-size="21.80" fill="#000" font-weight="bold" textLength="52.80" lengthAdjust="spacingAndGlyphs" stroke="#000" stroke-width="0.5" >90%</text>
<line x1="176.50" y1="851.50" x2="1633.00" y2="851.50" stroke="#5a7eab" stroke-width="1" />
<text x="87.13" y="858.70" font-size="21.80" fill="#000" font-weight="bold" textLength="67.47" lengthAdjust="spacingAndGlyphs" stroke="#000" stroke-width="0.5" >100%</text>
<rect x="225.30" y="1133.73" width="194.20" height="355.77" fill="#4cb2e6" />
<rect x="225.30" y="903.61" width="194.20" height="230.11" fill="#4f52d2" />
<rect x="225.30" y="852.95" width="194.20" height="50.67" fill="#f07a6e" />
<rect x="225.30" y="852.59" width="194.20" height="0.35" fill="#f0b428" />
<rect x="225.30" y="851.50" width="194.20" height="1.09" fill="#30b7a2" />
<rect x="267.90" y="1294.11" width="109.00" height="35.00" fill="#dfe9f5" />
<text x="277.10" y="1319.41" font-size="22.53" fill="#000" font-weight="bold" textLength="91.20" lengthAdjust="spacingAndGlyphs" stroke="#000" stroke-width="0.6" >421,875</text>
<rect x="264.40" y="1001.17" width="116.00" height="35.00" fill="#aaaef0" />
<text x="279.80" y="1026.47" font-size="22.53" fill="#000" font-weight="bold" textLength="91.20" lengthAdjust="spacingAndGlyphs" stroke="#000" stroke-width="0.6" >272,869</text>
<rect x="271.90" y="860.78" width="101.00" height="35.00" fill="#f8cbad" />
<text x="286.82" y="886.08" font-size="22.53" fill="#000" font-weight="bold" textLength="77.17" lengthAdjust="spacingAndGlyphs" stroke="#000" stroke-width="0.6" >60,080</text>
<rect x="282.10" y="835.30" width="80.60" height="34.50" fill="#e2efda" />
<text x="290.83" y="860.35" font-size="22.53" fill="#000" font-weight="bold" textLength="63.14" lengthAdjust="spacingAndGlyphs" stroke="#000" stroke-width="0.6" >1,296</text>
<text x="294.66" y="1526.00" font-size="22.67" fill="#000" font-weight="bold" textLength="55.48" lengthAdjust="spacingAndGlyphs" stroke="#000" stroke-width="0.5" >2026</text>
<rect x="517.30" y="1110.05" width="194.20" height="379.45" fill="#4cb2e6" />
<rect x="517.30" y="894.32" width="194.20" height="215.73" fill="#4f52d2" />
<rect x="517.30" y="852.69" width="194.20" height="41.62" fill="#f07a6e" />
<rect x="517.30" y="852.34" width="194.20" height="0.36" fill="#f0b428" />
<rect x="517.30" y="851.50" width="194.20" height="0.84" fill="#30b7a2" />
<rect x="549.30" y="1282.27" width="130.20" height="35.00" fill="#dfe9f5" />
<text x="558.58" y="1307.57" font-size="22.53" fill="#000" font-weight="bold" textLength="112.24" lengthAdjust="spacingAndGlyphs" stroke="#000" stroke-width="0.6" >1,309,017</text>
<rect x="556.60" y="984.68" width="115.60" height="35.00" fill="#aaaef0" />
<text x="571.80" y="1009.98" font-size="22.53" fill="#000" font-weight="bold" textLength="91.20" lengthAdjust="spacingAndGlyphs" stroke="#000" stroke-width="0.6" >744,204</text>
<rect x="556.60" y="856.00" width="115.60" height="35.00" fill="#f8cbad" />
<text x="571.80" y="881.30" font-size="22.53" fill="#000" font-weight="bold" textLength="91.20" lengthAdjust="spacingAndGlyphs" stroke="#000" stroke-width="0.6" >143,593</text>
<rect x="571.40" y="835.17" width="86.00" height="34.50" fill="#e2efda" />
<text x="582.83" y="860.22" font-size="22.53" fill="#000" font-weight="bold" textLength="63.14" lengthAdjust="spacingAndGlyphs" stroke="#000" stroke-width="0.6" >2,882</text>
<text x="586.66" y="1526.00" font-size="22.67" fill="#000" font-weight="bold" textLength="55.48" lengthAdjust="spacingAndGlyphs" stroke="#000" stroke-width="0.5" >2027</text>
<rect x="808.30" y="1107.16" width="194.20" height="382.34" fill="#4cb2e6" />
<rect x="808.30" y="892.40" width="194.20" height="214.76" fill="#4f52d2" />
<rect x="808.30" y="852.61" width="194.20" height="39.80" fill="#f07a6e" />
<rect x="808.30" y="852.27" width="194.20" height="0.34" fill="#f0b428" />
<rect x="808.30" y="851.50" width="194.20" height="0.77" fill="#30b7a2" />
<rect x="840.40" y="1280.83" width="130.00" height="35.00" fill="#dfe9f5" />
<text x="849.58" y="1306.13" font-size="22.53" fill="#000" font-weight="bold" textLength="112.24" lengthAdjust="spacingAndGlyphs" stroke="#000" stroke-width="0.6" >2,542,716</text>
<rect x="836.40" y="982.28" width="138.00" height="35.00" fill="#aaaef0" />
<text x="852.28" y="1007.58" font-size="22.53" fill="#000" font-weight="bold" textLength="112.24" lengthAdjust="spacingAndGlyphs" stroke="#000" stroke-width="0.6" >1,428,216</text>
<rect x="847.40" y="855.00" width="116.00" height="35.00" fill="#f8cbad" />
<text x="862.80" y="880.30" font-size="22.53" fill="#000" font-weight="bold" textLength="91.20" lengthAdjust="spacingAndGlyphs" stroke="#000" stroke-width="0.6" >264,660</text>
<rect x="862.15" y="835.13" width="86.50" height="34.50" fill="#e2efda" />
<text x="873.83" y="860.18" font-size="22.53" fill="#000" font-weight="bold" textLength="63.14" lengthAdjust="spacingAndGlyphs" stroke="#000" stroke-width="0.6" >5,100</text>
<text x="877.66" y="1526.00" font-size="22.67" fill="#000" font-weight="bold" textLength="55.48" lengthAdjust="spacingAndGlyphs" stroke="#000" stroke-width="0.5" >2028</text>
<rect x="1099.20" y="1103.49" width="194.20" height="386.01" fill="#4cb2e6" />
<rect x="1099.20" y="890.35" width="194.20" height="213.13" fill="#4f52d2" />
<rect x="1099.20" y="852.52" width="194.20" height="37.83" fill="#f07a6e" />
<rect x="1099.20" y="852.20" width="194.20" height="0.32" fill="#f0b428" />
<rect x="1099.20" y="851.50" width="194.20" height="0.70" fill="#30b7a2" />
<rect x="1131.30" y="1278.99" width="130.00" height="35.00" fill="#dfe9f5" />
<text x="1140.48" y="1304.29" font-size="22.53" fill="#000" font-weight="bold" textLength="112.24" lengthAdjust="spacingAndGlyphs" stroke="#000" stroke-width="0.6" >4,172,060</text>
<rect x="1127.95" y="979.42" width="136.70" height="35.00" fill="#aaaef0" />
<text x="1143.18" y="1004.72" font-size="22.53" fill="#000" font-weight="bold" textLength="112.24" lengthAdjust="spacingAndGlyphs" stroke="#000" stroke-width="0.6" >2,303,556</text>
<rect x="1138.55" y="853.94" width="115.50" height="35.00" fill="#f8cbad" />
<text x="1153.70" y="879.24" font-size="22.53" fill="#000" font-weight="bold" textLength="91.20" lengthAdjust="spacingAndGlyphs" stroke="#000" stroke-width="0.6" >408,868</text>
<rect x="1152.80" y="835.10" width="87.00" height="34.50" fill="#e2efda" />
<text x="1164.73" y="860.15" font-size="22.53" fill="#000" font-weight="bold" textLength="63.14" lengthAdjust="spacingAndGlyphs" stroke="#000" stroke-width="0.6" >7,562</text>
<text x="1168.56" y="1526.00" font-size="22.67" fill="#000" font-weight="bold" textLength="55.48" lengthAdjust="spacingAndGlyphs" stroke="#000" stroke-width="0.5" >2029</text>
<rect x="1390.40" y="1102.11" width="194.20" height="387.39" fill="#4cb2e6" />
<rect x="1390.40" y="889.16" width="194.20" height="212.95" fill="#4f52d2" />
<rect x="1390.40" y="852.46" width="194.20" height="36.70" fill="#f07a6e" />
<rect x="1390.40" y="852.15" width="194.20" height="0.31" fill="#f0b428" />
<rect x="1390.40" y="851.50" width="194.20" height="0.65" fill="#30b7a2" />
<rect x="1422.25" y="1278.31" width="130.50" height="35.00" fill="#dfe9f5" />
<text x="1431.68" y="1303.61" font-size="22.53" fill="#000" font-weight="bold" textLength="112.24" lengthAdjust="spacingAndGlyphs" stroke="#000" stroke-width="0.6" >6,147,706</text>
<rect x="1418.95" y="978.14" width="137.10" height="35.00" fill="#aaaef0" />
<text x="1434.38" y="1003.44" font-size="22.53" fill="#000" font-weight="bold" textLength="112.24" lengthAdjust="spacingAndGlyphs" stroke="#000" stroke-width="0.6" >3,379,386</text>
<rect x="1429.40" y="853.31" width="116.20" height="35.00" fill="#f8cbad" />
<text x="1444.90" y="878.61" font-size="22.53" fill="#000" font-weight="bold" textLength="91.20" lengthAdjust="spacingAndGlyphs" stroke="#000" stroke-width="0.6" >582,414</text>
<rect x="1440.00" y="835.08" width="95.00" height="34.50" fill="#e2efda" />
<text x="1448.92" y="860.13" font-size="22.53" fill="#000" font-weight="bold" textLength="77.17" lengthAdjust="spacingAndGlyphs" stroke="#000" stroke-width="0.6" >10,370</text>
<text x="1459.76" y="1526.00" font-size="22.67" fill="#000" font-weight="bold" textLength="55.48" lengthAdjust="spacingAndGlyphs" stroke="#000" stroke-width="0.5" >2030</text>
<line x1="2069.00" y1="1488.50" x2="2846.00" y2="1488.50" stroke="#5bb3de" stroke-width="1" />
<text x="2031.40" y="1494.80" font-size="21.80" fill="#000" font-weight="bold" textLength="9.00" lengthAdjust="spacingAndGlyphs" >-</text>
<line x1="2069.00" y1="1397.50" x2="2846.00" y2="1397.50" stroke="#5bb3de" stroke-width="1" />
<text x="1928.87" y="1403.87" font-size="21.80" fill="#000" font-weight="bold" textLength="111.53" lengthAdjust="spacingAndGlyphs" stroke="#000" stroke-width="0.5" >1,000,000</text>
<line x1="2069.00" y1="1306.50" x2="2846.00" y2="1306.50" stroke="#5bb3de" stroke-width="1" />
<text x="1928.87" y="1312.94" font-size="21.80" fill="#000" font-weight="bold" textLength="111.53" lengthAdjust="spacingAndGlyphs" stroke="#000" stroke-width="0.5" >2,000,000</text>
<line x1="2069.00" y1="1215.50" x2="2846.00" y2="1215.50" stroke="#5bb3de" stroke-width="1" />
<text x="1928.87" y="1222.01" font-size="21.80" fill="#000" font-weight="bold" textLength="111.53" lengthAdjust="spacingAndGlyphs" stroke="#000" stroke-width="0.5" >3,000,000</text>
<line x1="2069.00" y1="1124.50" x2="2846.00" y2="1124.50" stroke="#5bb3de" stroke-width="1" />
<text x="1928.87" y="1131.08" font-size="21.80" fill="#000" font-weight="bold" textLength="111.53" lengthAdjust="spacingAndGlyphs" stroke="#000" stroke-width="0.5" >4,000,000</text>
<line x1="2069.00" y1="1033.50" x2="2846.00" y2="1033.50" stroke="#5bb3de" stroke-width="1" />
<text x="1928.87" y="1040.15" font-size="21.80" fill="#000" font-weight="bold" textLength="111.53" lengthAdjust="spacingAndGlyphs" stroke="#000" stroke-width="0.5" >5,000,000</text>
<line x1="2069.00" y1="942.50" x2="2846.00" y2="942.50" stroke="#5bb3de" stroke-width="1" />
<text x="1928.87" y="949.22" font-size="21.80" fill="#000" font-weight="bold" textLength="111.53" lengthAdjust="spacingAndGlyphs" stroke="#000" stroke-width="0.5" >6,000,000</text>
<line x1="2069.00" y1="851.50" x2="2846.00" y2="851.50" stroke="#5bb3de" stroke-width="1" />
<text x="1928.87" y="858.29" font-size="21.80" fill="#000" font-weight="bold" textLength="111.53" lengthAdjust="spacingAndGlyphs" stroke="#000" stroke-width="0.5" >7,000,000</text>
<text x="2118.26" y="1522.90" font-size="22.67" fill="#000" font-weight="bold" textLength="55.48" lengthAdjust="spacingAndGlyphs" stroke="#000" stroke-width="0.5" >2026</text>
<text x="2274.86" y="1522.90" font-size="22.67" fill="#000" font-weight="bold" textLength="55.48" lengthAdjust="spacingAndGlyphs" stroke="#000" stroke-width="0.5" >2027</text>
<text x="2430.46" y="1522.90" font-size="22.67" fill="#000" font-weight="bold" textLength="55.48" lengthAdjust="spacingAndGlyphs" stroke="#000" stroke-width="0.5" >2028</text>
<text x="2585.86" y="1522.90" font-size="22.67" fill="#000" font-weight="bold" textLength="55.48" lengthAdjust="spacingAndGlyphs" stroke="#000" stroke-width="0.5" >2029</text>
<text x="2741.26" y="1522.90" font-size="22.67" fill="#000" font-weight="bold" textLength="55.48" lengthAdjust="spacingAndGlyphs" stroke="#000" stroke-width="0.5" >2030</text>
<polyline points="2146.0,1488.0 2302.6,1487.9 2458.2,1487.8 2613.6,1487.7 2769.0,1487.6" fill="none" stroke="#f0b428" stroke-width="5" stroke-linejoin="round"/>
<polyline points="2146.0,1487.9 2302.6,1487.7 2458.2,1487.5 2613.6,1487.3 2769.0,1487.1" fill="none" stroke="#30b7a2" stroke-width="5" stroke-linejoin="round"/>
<polyline points="2146.0,1482.5 2302.6,1474.9 2458.2,1463.9 2613.6,1450.8 2769.0,1435.0" fill="none" stroke="#f07a6e" stroke-width="5" stroke-linejoin="round"/>
<polyline points="2146.0,1463.2 2302.6,1420.3 2458.2,1358.1 2613.6,1278.5 2769.0,1180.7" fill="none" stroke="#4f52d2" stroke-width="5" stroke-linejoin="round"/>
<polyline points="2146.0,1449.6 2302.6,1369.0 2458.2,1256.8 2613.6,1108.6 2769.0,929.0" fill="none" stroke="#4cb2e6" stroke-width="5" stroke-linejoin="round"/>
<polygon points="2146.0,1473.5 2154.5,1488.5 2137.5,1488.5" fill="#f07a6e"/>
<rect x="2137.50" y="1479.38" width="17.00" height="17.00" fill="#30b7a2" />
<rect x="2137.50" y="1454.69" width="17.00" height="17.00" fill="#4f52d2" />
<circle cx="2146.0" cy="1449.6" r="7.5" fill="#4cb2e6"/>
<polygon points="2302.6,1465.9 2311.1,1480.9 2294.1,1480.9" fill="#f07a6e"/>
<rect x="2294.10" y="1479.24" width="17.00" height="17.00" fill="#30b7a2" />
<rect x="2294.10" y="1411.83" width="17.00" height="17.00" fill="#4f52d2" />
<circle cx="2302.6" cy="1369.0" r="7.5" fill="#4cb2e6"/>
<polygon points="2458.2,1454.9 2466.7,1469.9 2449.7,1469.9" fill="#f07a6e"/>
<rect x="2449.70" y="1479.04" width="17.00" height="17.00" fill="#30b7a2" />
<rect x="2449.70" y="1349.63" width="17.00" height="17.00" fill="#4f52d2" />
<circle cx="2458.2" cy="1256.8" r="7.5" fill="#4cb2e6"/>
<polygon points="2613.6,1441.8 2622.1,1456.8 2605.1,1456.8" fill="#f07a6e"/>
<rect x="2605.10" y="1478.81" width="17.00" height="17.00" fill="#30b7a2" />
<rect x="2605.10" y="1270.04" width="17.00" height="17.00" fill="#4f52d2" />
<circle cx="2613.6" cy="1108.6" r="7.5" fill="#4cb2e6"/>
<polygon points="2769.0,1426.0 2777.5,1441.0 2760.5,1441.0" fill="#f07a6e"/>
<rect x="2760.50" y="1478.56" width="17.00" height="17.00" fill="#30b7a2" />
<rect x="2760.50" y="1172.21" width="17.00" height="17.00" fill="#4f52d2" />
<circle cx="2769.0" cy="929.0" r="7.5" fill="#4cb2e6"/>
<line x1="1651.00" y1="888.30" x2="1704.50" y2="888.30" stroke="#4cb2e6" stroke-width="5" stroke-linecap="round"/>
<circle cx="1677.5" cy="888.3" r="7" fill="#4cb2e6"/>
<text x="1711.70" y="895.60" font-size="21.22" fill="#000" font-weight="bold" textLength="220.71" lengthAdjust="spacingAndGlyphs" stroke="#000" stroke-width="0.5" >Transactional - POS</text>
<text x="1711.70" y="922.60" font-size="21.22" fill="#000" font-weight="bold" textLength="112.18" lengthAdjust="spacingAndGlyphs" stroke="#000" stroke-width="0.5" >Enterprise</text>
<line x1="1651.00" y1="1020.40" x2="1704.50" y2="1020.40" stroke="#4f52d2" stroke-width="5" stroke-linecap="round"/>
<rect x="1669.50" y="1012.40" width="16.00" height="16.00" fill="#4f52d2" />
<text x="1711.70" y="1027.70" font-size="21.22" fill="#000" font-weight="bold" textLength="220.71" lengthAdjust="spacingAndGlyphs" stroke="#000" stroke-width="0.5" >Transactional - POS</text>
<text x="1711.70" y="1054.70" font-size="21.22" fill="#000" font-weight="bold" textLength="38.31" lengthAdjust="spacingAndGlyphs" stroke="#000" stroke-width="0.5" >Pro</text>
<line x1="1651.00" y1="1152.80" x2="1704.50" y2="1152.80" stroke="#f07a6e" stroke-width="5" stroke-linecap="round"/>
<polygon points="1677.5,1143.8 1685.5,1157.8 1669.5,1157.8" fill="#f07a6e"/>
<text x="1711.70" y="1160.10" font-size="21.22" fill="#000" font-weight="bold" textLength="220.71" lengthAdjust="spacingAndGlyphs" stroke="#000" stroke-width="0.5" >Transactional - POS</text>
<text x="1711.70" y="1187.10" font-size="21.22" fill="#000" font-weight="bold" textLength="60.19" lengthAdjust="spacingAndGlyphs" stroke="#000" stroke-width="0.5" >Basic</text>
<line x1="1651.00" y1="1284.60" x2="1704.50" y2="1284.60" stroke="#f0b428" stroke-width="5" stroke-linecap="round"/>
<path d="M1671.5,1278.6 L1683.5,1290.6 M1683.5,1278.6 L1671.5,1290.6" stroke="#f0b428" stroke-width="1.5"/>
<text x="1711.70" y="1291.90" font-size="21.22" fill="#000" font-weight="bold" textLength="209.32" lengthAdjust="spacingAndGlyphs" stroke="#000" stroke-width="0.5" >Subscription - POS</text>
<text x="1711.70" y="1318.90" font-size="21.22" fill="#000" font-weight="bold" textLength="112.18" lengthAdjust="spacingAndGlyphs" stroke="#000" stroke-width="0.5" >Enterprise</text>
<line x1="1651.00" y1="1417.00" x2="1704.50" y2="1417.00" stroke="#30b7a2" stroke-width="5" stroke-linecap="round"/>
<rect x="1671.50" y="1411.00" width="12.00" height="12.00" fill="#5fae6e" />
<text x="1711.70" y="1424.30" font-size="21.22" fill="#000" font-weight="bold" textLength="166.93" lengthAdjust="spacingAndGlyphs" stroke="#000" stroke-width="0.5" >Other Revenue</text>
<line x1="83.00" y1="1618.50" x2="221.00" y2="1618.50" stroke="#5bb3de" stroke-width="1" />
<line x1="352.00" y1="1618.50" x2="1577.00" y2="1618.50" stroke="#5bb3de" stroke-width="1" />
<text x="229.80" y="1642.00" font-size="22.09" fill="#000" font-weight="bold" textLength="112.20" lengthAdjust="spacingAndGlyphs" >421,875.0</text>
<rect x="150.00" y="1659.30" width="271.70" height="12.00" fill="#4cb2e6" />
<rect x="1602.60" y="1646.00" width="12.10" height="12.00" fill="#4cb2e6" />
<text x="1620.00" y="1658.80" font-size="21.22" fill="#000" font-weight="bold" textLength="220.00" lengthAdjust="spacingAndGlyphs" >Transactional - POS</text>
<rect x="2273.60" y="1651.50" width="79.40" height="30.00" fill="#fff" stroke="#555" stroke-width="1.5"/>
<rect x="2391.40" y="1649.40" width="79.60" height="30.00" fill="#fff" stroke="#555" stroke-width="1.5"/>
<rect x="2379" y="1667.5" width="12" height="8" fill="#fff" stroke="#444" stroke-width="1"/>
<text x="2285.00" y="1675.00" font-size="22.09" fill="#000" font-weight="bold" textLength="57.00" lengthAdjust="spacingAndGlyphs" >0.1%</text>
<text x="2403.00" y="1674.00" font-size="22.09" fill="#000" font-weight="bold" textLength="57.00" lengthAdjust="spacingAndGlyphs" >0.2%</text>
<rect x="37.9" y="34.9" width="20" height="24.1" rx="3" fill="#23782f"/>
<path d="M37.9,43 V37.9 a3,3 0 0 1 3,-3 H47.5 V43 Z" fill="#6ad05a"/>
<path d="M47.5,34.9 H54.9 a3,3 0 0 1 3,3 V43 H47.5 Z" fill="#b9e77a"/>
<rect x="35.2" y="43" width="12.7" height="12" rx="2.5" fill="#0f5a2e"/>
<text x="38.30" y="52.60" font-size="12.50" fill="#ffffff" font-weight="bold" textLength="7.00" lengthAdjust="spacingAndGlyphs" >x</text>
<text x="95.00" y="53.60" font-size="17.30" fill="#ffffff" textLength="206.30" lengthAdjust="spacingAndGlyphs" >point-of-sale-systems.xlsx</text>
<text x="312.00" y="53.60" font-size="17.30" fill="#ffffff" textLength="5.50" lengthAdjust="spacingAndGlyphs" >-</text>
<text x="328.60" y="53.60" font-size="17.30" fill="#ffffff" textLength="81.60" lengthAdjust="spacingAndGlyphs" >Read-Only</text>
<path d="M418,47.5 L425,54 L432,47.5" fill="none" stroke="#fff" stroke-width="1.6"/>
<circle cx="2489.5" cy="43.5" r="7" fill="none" stroke="#fff" stroke-width="1.7"/>
<path d="M2484.5,48.5 L2476.5,56.5" stroke="#fff" stroke-width="1.8"/>
<defs><linearGradient id="av" x1="0" y1="0" x2="0" y2="1"><stop offset="0" stop-color="#7fa4cc"/><stop offset="0.45" stop-color="#9fc6c8"/><stop offset="0.8" stop-color="#b8c4c0"/><stop offset="1" stop-color="#d8cfc0"/></linearGradient></defs>
<circle cx="2571" cy="46.8" r="18" fill="url(#av)"/>
<ellipse cx="2571" cy="45" rx="7" ry="9.5" fill="#b88a78"/>
<path d="M2559,64 q2,-8 12,-9 q10,1 12,9 z" fill="#e8e0d0"/>
<path d="M2630.5,43.8 L2635,36 H2647.5 L2652,43.8 L2641.2,56 Z M2630.5,43.8 H2652 M2635,36 L2638.5,43.8 L2641.2,36 L2644,43.8 L2647.5,36 M2638.5,43.8 L2641.2,56 L2644,43.8" fill="none" stroke="#fff" stroke-width="1.5" stroke-linejoin="round"/>
<line x1="2703.50" y1="46.30" x2="2718.50" y2="46.30" stroke="#fff" stroke-width="1.5" />
<rect x="2775.8" y="43.2" width="10.5" height="10.8" rx="2" fill="none" stroke="#fff" stroke-width="1.6"/>
<path d="M2778.5,40.5 a2.5,2.5 0 0 1 2.5,-2 h4.5 a3.5,3.5 0 0 1 3.5,3.5 v5 a2.5,2.5 0 0 1 -2,2.5" fill="none" stroke="#fff" stroke-width="1.6"/>
<path d="M2847.5,39.5 L2862.5,54.5 M2862.5,39.5 L2847.5,54.5" stroke="#fff" stroke-width="1.5"/>
<rect x="2621.5" y="87.9" width="133.5" height="34" rx="5" fill="#2b2b2b" stroke="#666" stroke-width="1"/>
<path d="M2631,97.5 h13 v10 h-8.5 l-4.5,4 z" fill="none" stroke="#fff" stroke-width="1.5" stroke-linejoin="round"/>
<text x="2652.00" y="114.20" font-size="17.30" fill="#ffffff" textLength="94.00" lengthAdjust="spacingAndGlyphs" >Comments</text>
<rect x="2768.5" y="87.5" width="104.2" height="35" rx="5" fill="#3aa863"/>
<path d="M2776,104 v11.5 h14 v-5 M2779,110 c0,-5 3,-8 9,-8 v-3.5 l6,5.5 -6,5.5 v-3.5 c-4,0 -7,1 -9,4" fill="none" stroke="#0a2a14" stroke-width="1.5" stroke-linejoin="round"/>
<text x="2799.50" y="114.20" font-size="17.30" fill="#0a1f10" textLength="48.00" lengthAdjust="spacingAndGlyphs" >Share</text>
<path d="M2858.5,102 L2862,105.5 L2865.5,102" fill="none" stroke="#0a1f10" stroke-width="1.5"/>
<text x="42.80" y="113.70" font-size="19.33" fill="#ffffff" textLength="29.20" lengthAdjust="spacingAndGlyphs" >File</text>
<text x="111.80" y="113.70" font-size="19.33" fill="#ffffff" font-weight="bold" textLength="54.60" lengthAdjust="spacingAndGlyphs" >Home</text>
<text x="198.60" y="113.70" font-size="19.33" fill="#ffffff" textLength="46.90" lengthAdjust="spacingAndGlyphs" >Insert</text>
<text x="277.80" y="113.70" font-size="19.33" fill="#ffffff" textLength="44.40" lengthAdjust="spacingAndGlyphs" >Draw</text>
<text x="353.00" y="113.70" font-size="19.33" fill="#ffffff" textLength="105.40" lengthAdjust="spacingAndGlyphs" >Page Layout</text>
<text x="491.00" y="113.70" font-size="19.33" fill="#ffffff" textLength="80.00" lengthAdjust="spacingAndGlyphs" >Formulas</text>
<text x="600.60" y="113.70" font-size="19.33" fill="#ffffff" textLength="39.80" lengthAdjust="spacingAndGlyphs" >Data</text>
<text x="671.70" y="113.70" font-size="19.33" fill="#ffffff" textLength="58.80" lengthAdjust="spacingAndGlyphs" >Review</text>
<text x="762.00" y="113.70" font-size="19.33" fill="#ffffff" textLength="40.80" lengthAdjust="spacingAndGlyphs" >View</text>
<text x="834.00" y="113.70" font-size="19.33" fill="#ffffff" textLength="86.50" lengthAdjust="spacingAndGlyphs" >Automate</text>
<text x="951.70" y="113.70" font-size="19.33" fill="#ffffff" textLength="39.30" lengthAdjust="spacingAndGlyphs" >Help</text>
<rect x="111.3" y="120.2" width="57.5" height="2.8" rx="1.4" fill="#6cc18e"/>
<rect x="22.9" y="128.5" width="2855" height="149" rx="10" fill="#292929"/>
<line x1="282.50" y1="134.00" x2="282.50" y2="275.00" stroke="#555555" stroke-width="1" />
<line x1="633.50" y1="134.00" x2="633.50" y2="275.00" stroke="#555555" stroke-width="1" />
<line x1="1083.50" y1="134.00" x2="1083.50" y2="275.00" stroke="#555555" stroke-width="1" />
<line x1="1325.50" y1="134.00" x2="1325.50" y2="275.00" stroke="#555555" stroke-width="1" />
<line x1="1544.50" y1="134.00" x2="1544.50" y2="275.00" stroke="#555555" stroke-width="1" />
<line x1="1868.50" y1="134.00" x2="1868.50" y2="275.00" stroke="#555555" stroke-width="1" />
<line x1="1963.50" y1="134.00" x2="1963.50" y2="275.00" stroke="#555555" stroke-width="1" />
<line x1="2056.50" y1="134.00" x2="2056.50" y2="275.00" stroke="#555555" stroke-width="1" />
<path d="M63,148.5 H56.8 V182 H75 M79,148.5 H85.5 V159" fill="none" stroke="#9a9a9a" stroke-width="3"/>
<path d="M65,151.5 V146 H68 a3.5,3.5 0 0 1 7,0 H78 V151.5 Z" fill="none" stroke="#9a9a9a" stroke-width="2"/>
<rect x="76" y="159.5" width="19.5" height="25.5" fill="none" stroke="#9a9a9a" stroke-width="1.8"/>
<text x="52.00" y="209.70" font-size="16.28" fill="#7d7d7d" textLength="40.00" lengthAdjust="spacingAndGlyphs" >Paste</text>
<path d="M67.3,224.0 L71.3,228.0 L75.3,224.0" fill="none" stroke="#7d7d7d" stroke-width="1.5"/>
<path d="M117.5,140.5 L126.5,160 M131.5,140.5 L122.5,160" stroke="#e0e0e0" stroke-width="1.3"/>
<circle cx="119.7" cy="160.8" r="3.3" fill="none" stroke="#4a9fe0" stroke-width="2.2"/>
<circle cx="128.3" cy="160.8" r="3.3" fill="none" stroke="#4a9fe0" stroke-width="2.2"/>
<text x="142.30" y="159.00" font-size="15.99" fill="#ffffff" textLength="27.00" lengthAdjust="spacingAndGlyphs" >Cut</text>
<path d="M121,193 H112.5 V179.5 H122 L125,183" fill="none" stroke="#e0e0e0" stroke-width="1.5"/>
<path d="M121.5,184 H130.5 L135.5,189 V202.5 H121.5 Z M130.5,184 V189 H135.5 M124.5,195 H132.5 M124.5,198.5 H132.5" fill="none" stroke="#e0e0e0" stroke-width="1.5"/>
<text x="142.30" y="197.70" font-size="15.99" fill="#ffffff" textLength="41.60" lengthAdjust="spacingAndGlyphs" >Copy</text>
<path d="M211.6,189.8 L215.4,193.6 L219.2,189.8" fill="none" stroke="#e6e6e6" stroke-width="1.5"/>
<path d="M112.5,228.5 L122.5,239.5 L131,226.5 L124,220.5 Z" fill="#f2b544" stroke="#f2d28a" stroke-width="1.2"/>
<path d="M112.5,228.5 L124,220.5 L131,226.5" fill="#2a2a2a"/>
<path d="M123.5,222 L130,216.5 L135.5,221.5 L129.5,227" fill="none" stroke="#e0e0e0" stroke-width="1.5"/>
<text x="142.30" y="236.80" font-size="15.99" fill="#ffffff" textLength="114.70" lengthAdjust="spacingAndGlyphs" >Format Painter</text>
<text x="109.20" y="267.80" font-size="15.99" fill="#ffffff" textLength="67.60" lengthAdjust="spacingAndGlyphs" >Clipboard</text>
<path d="M265.8,268.8 V257.6 H277 M268.5,260.3 L276,267.8 M270.5,267.8 H276 V262.3" fill="none" stroke="#e0e0e0" stroke-width="1.5"/>
<rect x="295.8" y="146.9" width="179.2" height="34.6" rx="5" fill="#292929" stroke="#6a6a6a" stroke-width="1.2"/>
<rect x="479.8" y="146.9" width="63.6" height="34.6" rx="5" fill="#292929" stroke="#6a6a6a" stroke-width="1.2"/>
<text x="298.80" y="171.20" font-size="16.72" fill="#ffffff" textLength="62.90" lengthAdjust="spacingAndGlyphs" >Tahoma</text>
<text x="482.50" y="171.20" font-size="16.72" fill="#ffffff" textLength="9.20" lengthAdjust="spacingAndGlyphs" >8</text>
<path d="M463.3,162.0 L467.3,166.0 L471.3,162.0" fill="none" stroke="#e6e6e6" stroke-width="1.5"/>
<path d="M531.0,162.0 L535.0,166.0 L539.0,162.0" fill="none" stroke="#e6e6e6" stroke-width="1.5"/>
<text x="554.50" y="171.60" font-size="27.62" fill="#d8d8d8" textLength="16.00" lengthAdjust="spacingAndGlyphs" >A</text>
<path d="M570,157.5 L573.5,154 L577,157.5" fill="none" stroke="#3a9be0" stroke-width="1.6"/>
<text x="596.00" y="171.60" font-size="22.24" fill="#d8d8d8" textLength="13.00" lengthAdjust="spacingAndGlyphs" >A</text>
<path d="M609.5,154 L613,157.5 L616.5,154" fill="none" stroke="#3a9be0" stroke-width="1.6"/>
<text x="307.80" y="217.40" font-size="21.08" fill="#dcdcdc" font-weight="bold" textLength="11.50" lengthAdjust="spacingAndGlyphs" >B</text>
<text x="346.80" y="217.40" font-size="21.08" fill="#dcdcdc" font-style="italic" textLength="10.00" lengthAdjust="spacingAndGlyphs" style="font-family:Liberation Serif">I</text>
<text x="383.80" y="217.40" font-size="21.08" fill="#dcdcdc" textLength="12.00" lengthAdjust="spacingAndGlyphs" >U</text>
<line x1="383.80" y1="220.50" x2="395.80" y2="220.50" stroke="#dcdcdc" stroke-width="1.5" />
<path d="M415.3,210.4 L419.3,214.4 L423.3,210.4" fill="none" stroke="#e6e6e6" stroke-width="1.5"/>
<line x1="434.50" y1="194.00" x2="434.50" y2="229.50" stroke="#4a4a4a" stroke-width="1" />
<path d="M444.6,200.8 H466.3 V221 M444.6,200.8 V221 M455.5,200.8 V221 M444.6,211 H466.3" fill="none" stroke="#d0d0d0" stroke-width="1.3" stroke-dasharray="1.5,2"/>
<line x1="444.10" y1="221.80" x2="466.80" y2="221.80" stroke="#e0e0e0" stroke-width="1.8" />
<path d="M480.3,210.4 L484.3,214.4 L488.3,210.4" fill="none" stroke="#e6e6e6" stroke-width="1.5"/>
<line x1="499.50" y1="194.00" x2="499.50" y2="229.50" stroke="#4a4a4a" stroke-width="1" />
<path d="M512.5,207.5 L522,201 L529.5,209 L521,216.5 Z M520.5,202 V199 a2,2 0 0 1 4,0 V207" fill="none" stroke="#e0e0e0" stroke-width="1.5" stroke-linejoin="round"/>
<path d="M527.5,204.5 q3.5,-2 4,3.5 l-1.5,3" fill="none" stroke="#7ab8e8" stroke-width="2.2"/>
<rect x="508.80" y="218.10" width="24.40" height="5.70" fill="#f2ee00" />
<path d="M545.2,210.4 L549.2,214.4 L553.2,210.4" fill="none" stroke="#e6e6e6" stroke-width="1.5"/>
<text x="575.50" y="216.70" font-size="23.26" fill="#e0e0e0" textLength="13.50" lengthAdjust="spacingAndGlyphs" >A</text>
<rect x="569.50" y="218.10" width="24.50" height="5.70" fill="#e61414" />
<path d="M606.3,210.4 L610.3,214.4 L614.3,210.4" fill="none" stroke="#e6e6e6" stroke-width="1.5"/>
<text x="427.00" y="267.80" font-size="15.99" fill="#ffffff" textLength="36.50" lengthAdjust="spacingAndGlyphs" >Font</text>
<path d="M616.8,268.8 V257.6 H628 M619.5,260.3 L627,267.8 M621.5,267.8 H627 V262.3" fill="none" stroke="#e0e0e0" stroke-width="1.5"/>
<line x1="653.00" y1="153.00" x2="675.00" y2="153.00" stroke="#e0e0e0" stroke-width="1.6" />
<line x1="656.50" y1="159.50" x2="671.50" y2="159.50" stroke="#e0e0e0" stroke-width="1.6" />
<line x1="653.00" y1="166.00" x2="675.00" y2="166.00" stroke="#e0e0e0" stroke-width="1.6" />
<rect x="685.8" y="146.8" width="34.4" height="34.7" rx="4" fill="#3a3a3a" stroke="#8a8a8a" stroke-width="1"/>
<line x1="692.00" y1="157.00" x2="714.00" y2="157.00" stroke="#e0e0e0" stroke-width="1.6" />
<line x1="695.50" y1="163.30" x2="710.50" y2="163.30" stroke="#e0e0e0" stroke-width="1.6" />
<line x1="692.00" y1="169.60" x2="714.00" y2="169.60" stroke="#e0e0e0" stroke-width="1.6" />
<line x1="731.00" y1="162.00" x2="753.00" y2="162.00" stroke="#e0e0e0" stroke-width="1.6" />
<line x1="734.50" y1="168.50" x2="749.50" y2="168.50" stroke="#e0e0e0" stroke-width="1.6" />
<line x1="731.00" y1="175.00" x2="753.00" y2="175.00" stroke="#e0e0e0" stroke-width="1.6" />
<line x1="763.50" y1="146.00" x2="763.50" y2="182.00" stroke="#4a4a4a" stroke-width="1" />
<text x="772.50" y="165.00" font-size="15.26" fill="#d8d8d8" textLength="17.00" lengthAdjust="spacingAndGlyphs" transform="rotate(-45 781 161)">ab</text>
<path d="M782,174 L796,160 M790,160 H796 V166" fill="none" stroke="#3a9be0" stroke-width="1.6"/>
<path d="M806.5,162.2 L810.0,165.8 L813.5,162.2" fill="none" stroke="#e6e6e6" stroke-width="1.5"/>
<line x1="851.50" y1="144.00" x2="851.50" y2="237.00" stroke="#4a4a4a" stroke-width="1" />
<text x="870.50" y="163.80" font-size="15.99" fill="#d8d8d8" textLength="18.01" lengthAdjust="spacingAndGlyphs" >ab</text>
<text x="870.50" y="174.80" font-size="15.99" fill="#d8d8d8" textLength="7.00" lengthAdjust="spacingAndGlyphs" >c</text>
<path d="M889,166 v3 a4,4 0 0 1 -4,4 h-5 M883,170 l-3,3 3,3" fill="none" stroke="#3a9be0" stroke-width="1.6"/>
<text x="897.60" y="171.00" font-size="15.99" fill="#ffffff" textLength="77.40" lengthAdjust="spacingAndGlyphs" >Wrap Text</text>
<line x1="653.00" y1="201.80" x2="675.00" y2="201.80" stroke="#e0e0e0" stroke-width="1.6" />
<line x1="653.00" y1="208.20" x2="668.00" y2="208.20" stroke="#e0e0e0" stroke-width="1.6" />
<line x1="653.00" y1="214.60" x2="675.00" y2="214.60" stroke="#e0e0e0" stroke-width="1.6" />
<line x1="653.00" y1="221.00" x2="668.00" y2="221.00" stroke="#e0e0e0" stroke-width="1.6" />
<line x1="692.00" y1="201.80" x2="714.00" y2="201.80" stroke="#e0e0e0" stroke-width="1.6" />
<line x1="695.50" y1="208.20" x2="710.50" y2="208.20" stroke="#e0e0e0" stroke-width="1.6" />
<line x1="692.00" y1="214.60" x2="714.00" y2="214.60" stroke="#e0e0e0" stroke-width="1.6" />
<line x1="695.50" y1="221.00" x2="710.50" y2="221.00" stroke="#e0e0e0" stroke-width="1.6" />
<line x1="731.00" y1="201.80" x2="753.00" y2="201.80" stroke="#e0e0e0" stroke-width="1.6" />
<line x1="738.00" y1="208.20" x2="753.00" y2="208.20" stroke="#e0e0e0" stroke-width="1.6" />
<line x1="731.00" y1="214.60" x2="753.00" y2="214.60" stroke="#e0e0e0" stroke-width="1.6" />
<line x1="738.00" y1="221.00" x2="753.00" y2="221.00" stroke="#e0e0e0" stroke-width="1.6" />
<line x1="763.50" y1="194.00" x2="763.50" y2="230.00" stroke="#4a4a4a" stroke-width="1" />
<line x1="774.00" y1="201.80" x2="796.00" y2="201.80" stroke="#e0e0e0" stroke-width="1.6" />
<line x1="774.00" y1="208.20" x2="774.00" y2="208.20" stroke="#e0e0e0" stroke-width="1.6" />
<line x1="774.00" y1="214.60" x2="774.00" y2="214.60" stroke="#e0e0e0" stroke-width="1.6" />
<line x1="774.00" y1="221.00" x2="796.00" y2="221.00" stroke="#e0e0e0" stroke-width="1.6" />
<line x1="786.00" y1="208.20" x2="796.00" y2="208.20" stroke="#e0e0e0" stroke-width="1.6" />
<line x1="786.00" y1="214.60" x2="796.00" y2="214.60" stroke="#e0e0e0" stroke-width="1.6" />
<path d="M784,211.4 H775 M778.5,208 L775,211.4 L778.5,214.8" fill="none" stroke="#3a9be0" stroke-width="1.6"/>
<line x1="813.00" y1="201.80" x2="835.00" y2="201.80" stroke="#e0e0e0" stroke-width="1.6" />
<line x1="813.00" y1="208.20" x2="813.00" y2="208.20" stroke="#e0e0e0" stroke-width="1.6" />
<line x1="813.00" y1="214.60" x2="813.00" y2="214.60" stroke="#e0e0e0" stroke-width="1.6" />
<line x1="813.00" y1="221.00" x2="835.00" y2="221.00" stroke="#e0e0e0" stroke-width="1.6" />
<line x1="825.00" y1="208.20" x2="835.00" y2="208.20" stroke="#e0e0e0" stroke-width="1.6" />
<line x1="825.00" y1="214.60" x2="835.00" y2="214.60" stroke="#e0e0e0" stroke-width="1.6" />
<path d="M813,211.4 H822 M818.5,208 L822,211.4 L818.5,214.8" fill="none" stroke="#3a9be0" stroke-width="1.6"/>
<rect x="867.8" y="200.8" width="21.2" height="20.8" fill="none" stroke="#d0d0d0" stroke-width="1.5"/>
<path d="M878.4,200.8 V205 M878.4,217.5 V221.6" stroke="#d0d0d0" stroke-width="1.5"/>
<rect x="867.8" y="204.5" width="21.2" height="13" fill="none" stroke="#3a9be0" stroke-width="1.6"/>
<path d="M871,211 H886 M874,208 L871,211 L874,214 M883,208 L886,211 L883,214" fill="none" stroke="#3a9be0" stroke-width="1.5"/>
<text x="897.60" y="219.40" font-size="15.99" fill="#ffffff" textLength="125.70" lengthAdjust="spacingAndGlyphs" >Merge &amp; Center</text>
<path d="M1050.0,210.4 L1054.0,214.4 L1058.0,210.4" fill="none" stroke="#e6e6e6" stroke-width="1.5"/>
<text x="810.00" y="267.80" font-size="15.99" fill="#ffffff" textLength="72.00" lengthAdjust="spacingAndGlyphs" >Alignment</text>
<path d="M1066.8,268.8 V257.6 H1078 M1069.5,260.3 L1077,267.8 M1071.5,267.8 H1077 V262.3" fill="none" stroke="#e0e0e0" stroke-width="1.5"/>
<rect x="1097.1" y="146.8" width="216.2" height="34.7" rx="5" fill="#292929" stroke="#6a6a6a" stroke-width="1.2"/>
<text x="1099.50" y="171.00" font-size="16.72" fill="#ffffff" textLength="58.50" lengthAdjust="spacingAndGlyphs" >General</text>
<path d="M1301.4,162.0 L1305.4,166.0 L1309.4,162.0" fill="none" stroke="#e6e6e6" stroke-width="1.5"/>
<text x="1107.00" y="221.50" font-size="26.16" fill="#d8d8d8" textLength="12.00" lengthAdjust="spacingAndGlyphs" >$</text>
<path d="M1138.5,210.1 L1142.3,213.9 L1146.1,210.1" fill="none" stroke="#e6e6e6" stroke-width="1.5"/>
<text x="1163.80" y="222.50" font-size="26.89" fill="#d8d8d8" textLength="22.20" lengthAdjust="spacingAndGlyphs" >%</text>
<circle cx="1215" cy="209" r="5" fill="#d8d8d8"/>
<path d="M1219.6,210 q0.5,7 -9,11.5 q5,-4 4,-8 z" fill="#d8d8d8"/>
<line x1="1235.50" y1="194.00" x2="1235.50" y2="230.00" stroke="#4a4a4a" stroke-width="1" />
<text x="1261.00" y="208.00" font-size="12.35" fill="#d8d8d8" textLength="7.00" lengthAdjust="spacingAndGlyphs" >0</text>
<text x="1248.00" y="220.50" font-size="12.35" fill="#d8d8d8" textLength="20.00" lengthAdjust="spacingAndGlyphs" >.00</text>
<path d="M1258,205 H1245.5 M1249,201.5 L1245.5,205 L1249,208.5" fill="none" stroke="#3a9be0" stroke-width="1.5"/>
<text x="1287.00" y="208.00" font-size="12.35" fill="#d8d8d8" textLength="20.00" lengthAdjust="spacingAndGlyphs" >.00</text>
<text x="1300.00" y="220.50" font-size="12.35" fill="#d8d8d8" textLength="7.00" lengthAdjust="spacingAndGlyphs" >0</text>
<path d="M1284,217 H1296.5 M1293,213.5 L1296.5,217 L1293,220.5" fill="none" stroke="#3a9be0" stroke-width="1.5"/>
<text x="1163.80" y="267.80" font-size="15.99" fill="#ffffff" textLength="56.20" lengthAdjust="spacingAndGlyphs" >Number</text>
<path d="M1308.8,268.8 V257.6 H1320 M1311.5,260.3 L1319,267.8 M1313.5,267.8 H1319 V262.3" fill="none" stroke="#e0e0e0" stroke-width="1.5"/>
<rect x="1348" y="145.8" width="41.5" height="32" fill="none" stroke="#d0d0d0" stroke-width="1.6"/>
<line x1="1361.83" y1="145.80" x2="1361.83" y2="177.80" stroke="#d0d0d0" stroke-width="1.6" />
<line x1="1375.67" y1="145.80" x2="1375.67" y2="177.80" stroke="#d0d0d0" stroke-width="1.6" />
<line x1="1348.00" y1="156.47" x2="1389.50" y2="156.47" stroke="#d0d0d0" stroke-width="1.6" />
<line x1="1348.00" y1="167.13" x2="1389.50" y2="167.13" stroke="#d0d0d0" stroke-width="1.6" />
<rect x="1356.00" y="155.50" width="37.50" height="12.50" fill="#1e78d4" />
<path d="M1366,161.5 H1346 M1352,155 L1345.5,161.5 L1352,168" fill="none" stroke="#3a9be0" stroke-width="1.8"/>
<text x="1347.30" y="210.00" font-size="15.99" fill="#ffffff" textLength="43.70" lengthAdjust="spacingAndGlyphs" >Insert</text>
<path d="M1364.7,224.1 L1368.5,227.9 L1372.3,224.1" fill="none" stroke="#e6e6e6" stroke-width="1.5"/>
<rect x="1413.5" y="145.8" width="41.5" height="32" fill="none" stroke="#d0d0d0" stroke-width="1.6"/>
<line x1="1427.33" y1="145.80" x2="1427.33" y2="177.80" stroke="#d0d0d0" stroke-width="1.6" />
<line x1="1441.17" y1="145.80" x2="1441.17" y2="177.80" stroke="#d0d0d0" stroke-width="1.6" />
<line x1="1413.50" y1="156.47" x2="1455.00" y2="156.47" stroke="#d0d0d0" stroke-width="1.6" />
<line x1="1413.50" y1="167.13" x2="1455.00" y2="167.13" stroke="#d0d0d0" stroke-width="1.6" />
<rect x="1417.50" y="155.50" width="28.00" height="12.50" fill="#1e78d4" />
<path d="M1439.5,154 L1456.5,169.5 M1456.5,154 L1439.5,169.5" stroke="#e84a4a" stroke-width="2"/>
<text x="1409.00" y="210.00" font-size="15.99" fill="#ffffff" textLength="50.00" lengthAdjust="spacingAndGlyphs" >Delete</text>
<path d="M1430.0,224.1 L1433.8,227.9 L1437.6,224.1" fill="none" stroke="#e6e6e6" stroke-width="1.5"/>
<rect x="1479.5" y="145.8" width="41.5" height="32" fill="none" stroke="#d0d0d0" stroke-width="1.6"/>
<line x1="1493.33" y1="145.80" x2="1493.33" y2="177.80" stroke="#d0d0d0" stroke-width="1.6" />
<line x1="1507.17" y1="145.80" x2="1507.17" y2="177.80" stroke="#d0d0d0" stroke-width="1.6" />
<line x1="1479.50" y1="156.47" x2="1521.00" y2="156.47" stroke="#d0d0d0" stroke-width="1.6" />
<line x1="1479.50" y1="167.13" x2="1521.00" y2="167.13" stroke="#d0d0d0" stroke-width="1.6" />
<rect x="1487.50" y="155.80" width="25.50" height="12.00" fill="#1e78d4" />
<path d="M1488,139.5 H1512 M1488,137 V142 M1512,137 V142" fill="none" stroke="#3a9be0" stroke-width="1.6"/>
<text x="1472.60" y="207.70" font-size="15.99" fill="#ffffff" textLength="56.40" lengthAdjust="spacingAndGlyphs" >Format</text>
<path d="M1496.2,222.7 L1500.0,226.5 L1503.8,222.7" fill="none" stroke="#e6e6e6" stroke-width="1.5"/>
<text x="1418.00" y="267.80" font-size="15.99" fill="#ffffff" textLength="32.00" lengthAdjust="spacingAndGlyphs" >Cells</text>
<path d="M1583.5,142 H1566.5 L1575.5,152 L1566.5,162.5 H1583.5" fill="none" stroke="#e0e0e0" stroke-width="1.6"/>
<text x="1593.00" y="159.40" font-size="15.99" fill="#ffffff" textLength="73.70" lengthAdjust="spacingAndGlyphs" >AutoSum</text>
<path d="M1695.2,150.7 L1699.0,154.5 L1702.8,150.7" fill="none" stroke="#e6e6e6" stroke-width="1.5"/>
<rect x="1563.8" y="181" width="22.5" height="20" fill="none" stroke="#d0d0d0" stroke-width="1.6"/>
<line x1="1563.80" y1="184.50" x2="1586.30" y2="184.50" stroke="#d0d0d0" stroke-width="1" />
<path d="M1574.5,187 V197 M1570.5,193.5 L1574.5,197.5 L1578.5,193.5" fill="none" stroke="#3a9be0" stroke-width="1.7"/>
<text x="1593.00" y="197.80" font-size="15.99" fill="#ffffff" textLength="21.00" lengthAdjust="spacingAndGlyphs" >Fill</text>
<path d="M1620.9,189.1 L1624.4,192.6 L1627.9,189.1" fill="none" stroke="#e6e6e6" stroke-width="1.5"/>
<path d="M1563.6,233.3 L1569.2,228.4 L1576.4,235.5 L1571.4,240.7 Z" fill="#9a30b0"/>
<path d="M1563.6,233.3 L1577.7,218.8 L1586,226.6 L1571.4,240.7 Z M1569.2,228.4 L1576.4,235.5" fill="none" stroke="#d89ae0" stroke-width="1.6" stroke-linejoin="round"/>
<text x="1593.00" y="237.20" font-size="15.99" fill="#ffffff" textLength="39.00" lengthAdjust="spacingAndGlyphs" >Clear</text>
<path d="M1638.5,228.2 L1642.0,231.8 L1645.5,228.2" fill="none" stroke="#e6e6e6" stroke-width="1.5"/>
<text x="1730.00" y="161.50" font-size="20.35" fill="#3a9be0" textLength="13.50" lengthAdjust="spacingAndGlyphs" >A</text>
<text x="1731.00" y="181.50" font-size="18.90" fill="#e0e0e0" textLength="12.00" lengthAdjust="spacingAndGlyphs" >Z</text>
<path d="M1748,151.5 H1771.5 L1763,162 V174 H1756.5 V162 Z" fill="none" stroke="#e0e0e0" stroke-width="1.6"/>
<text x="1725.00" y="207.70" font-size="15.99" fill="#ffffff" textLength="51.70" lengthAdjust="spacingAndGlyphs" >Sort &amp;</text>
<text x="1724.00" y="231.80" font-size="15.99" fill="#ffffff" textLength="40.00" lengthAdjust="spacingAndGlyphs" >Filter</text>
<path d="M1768.5,223.2 L1772.0,226.8 L1775.5,223.2" fill="none" stroke="#e6e6e6" stroke-width="1.5"/>
<circle cx="1826" cy="157" r="15.5" fill="none" stroke="#e0e0e0" stroke-width="1.6"/>
<line x1="1815.00" y1="168.00" x2="1799.00" y2="184.00" stroke="#e0e0e0" stroke-width="1.8" />
<text x="1795.30" y="207.70" font-size="15.99" fill="#ffffff" textLength="52.70" lengthAdjust="spacingAndGlyphs" >Find &amp;</text>
<text x="1790.00" y="231.80" font-size="15.99" fill="#ffffff" textLength="46.00" lengthAdjust="spacingAndGlyphs" >Select</text>
<path d="M1842.0,223.2 L1845.5,226.8 L1849.0,223.2" fill="none" stroke="#e6e6e6" stroke-width="1.5"/>
<text x="1682.50" y="269.00" font-size="15.99" fill="#ffffff" textLength="47.50" lengthAdjust="spacingAndGlyphs" >Editing</text>
<rect x="1895.5" y="141.6" width="40.5" height="41.2" fill="none" stroke="#d5541e" stroke-width="2.2"/>
<rect x="1899.5" y="145.6" width="15" height="15" fill="none" stroke="#d5541e" stroke-width="2"/>
<rect x="1917" y="145.6" width="15" height="15" fill="none" stroke="#d5541e" stroke-width="2"/>
<rect x="1899.5" y="163.5" width="15" height="15" fill="none" stroke="#d5541e" stroke-width="2"/>
<rect x="1917" y="163.5" width="15" height="15" fill="none" stroke="#d5541e" stroke-width="2"/>
<text x="1885.00" y="207.70" font-size="15.99" fill="#ffffff" textLength="62.00" lengthAdjust="spacingAndGlyphs" >Add-ins</text>
<text x="1888.50" y="269.00" font-size="15.99" fill="#ffffff" textLength="53.00" lengthAdjust="spacingAndGlyphs" >Add-ins</text>
<rect x="1989.5" y="141.5" width="41" height="41" fill="none" stroke="#c8c8c8" stroke-width="1.6"/>
<rect x="1989.50" y="141.50" width="41.00" height="5.00" fill="#8a8a8a" />
<line x1="1989.50" y1="154.50" x2="2030.50" y2="154.50" stroke="#8a8a8a" stroke-width="1" />
<line x1="1989.50" y1="166.50" x2="2030.50" y2="166.50" stroke="#8a8a8a" stroke-width="1" />
<line x1="2001.50" y1="146.00" x2="2001.50" y2="182.50" stroke="#8a8a8a" stroke-width="1" />
<line x1="2016.50" y1="146.00" x2="2016.50" y2="182.50" stroke="#8a8a8a" stroke-width="1" />
<circle cx="2008" cy="161" r="11" fill="#292929" stroke="#e0e0e0" stroke-width="1.8"/>
<line x1="2016.00" y1="169.00" x2="2030.00" y2="183.00" stroke="#e0e0e0" stroke-width="2" />
<rect x="2002.00" y="160.00" width="3.00" height="6.00" fill="#a0a0a0" />
<rect x="2006.00" y="154.50" width="3.00" height="11.50" fill="#e0e0e0" />
<rect x="2010.50" y="157.00" width="3.00" height="9.00" fill="#3a9be0" />
<text x="1980.50" y="207.70" font-size="15.99" fill="#ffffff" textLength="60.30" lengthAdjust="spacingAndGlyphs" >Analyze</text>
<text x="1992.50" y="230.70" font-size="15.99" fill="#ffffff" textLength="36.20" lengthAdjust="spacingAndGlyphs" >Data</text>
<circle cx="2212" cy="198.2" r="56" fill="#ffffff"/>
<rect x="2181.80" y="172.80" width="61.00" height="52.90" fill="#5b5ce6" />
<rect x="2190.00" y="181.00" width="18.00" height="14.00" fill="#ffffff" />
<rect x="2216.50" y="181.00" width="18.00" height="14.00" fill="#ffffff" />
<rect x="2190.00" y="203.00" width="18.00" height="14.00" fill="#ffffff" />
<rect x="2216.50" y="203.00" width="18.00" height="14.00" fill="#ffffff" />
<rect x="2320.40" y="162.70" width="11.00" height="34.50" fill="#ffffff" />
<text x="2296.70" y="195.50" font-size="45.20" fill="#ffffff" font-weight="bold" textLength="17.20" lengthAdjust="spacingAndGlyphs" stroke="#ffffff" stroke-width="3.4" stroke-linejoin="round">F</text>
<text x="2337.90" y="195.50" font-size="45.20" fill="#ffffff" font-weight="bold" textLength="29.01" lengthAdjust="spacingAndGlyphs" stroke="#ffffff" stroke-width="3.4" stroke-linejoin="round">N</text>
<text x="2375.10" y="195.50" font-size="45.20" fill="#ffffff" font-weight="bold" textLength="37.70" lengthAdjust="spacingAndGlyphs" stroke="#ffffff" stroke-width="3.4" stroke-linejoin="round">M</text>
<text x="2455.70" y="195.50" font-size="45.20" fill="#ffffff" font-weight="bold" textLength="26.61" lengthAdjust="spacingAndGlyphs" stroke="#ffffff" stroke-width="3.4" stroke-linejoin="round">D</text>
<text x="2489.00" y="195.50" font-size="45.20" fill="#ffffff" font-weight="bold" textLength="20.30" lengthAdjust="spacingAndGlyphs" stroke="#ffffff" stroke-width="3.4" stroke-linejoin="round">E</text>
<text x="2515.70" y="195.50" font-size="45.20" fill="#ffffff" font-weight="bold" textLength="19.00" lengthAdjust="spacingAndGlyphs" stroke="#ffffff" stroke-width="3.4" stroke-linejoin="round">L</text>
<text x="2534.70" y="195.50" font-size="45.20" fill="#ffffff" font-weight="bold" textLength="26.90" lengthAdjust="spacingAndGlyphs" stroke="#ffffff" stroke-width="3.4" stroke-linejoin="round">S</text>
<text x="2565.00" y="195.50" font-size="45.20" fill="#ffffff" font-weight="bold" textLength="20.29" lengthAdjust="spacingAndGlyphs" stroke="#ffffff" stroke-width="3.4" stroke-linejoin="round">L</text>
<text x="2585.70" y="195.50" font-size="45.20" fill="#ffffff" font-weight="bold" textLength="32.91" lengthAdjust="spacingAndGlyphs" stroke="#ffffff" stroke-width="3.4" stroke-linejoin="round">A</text>
<text x="2623.60" y="195.50" font-size="45.20" fill="#ffffff" font-weight="bold" textLength="25.91" lengthAdjust="spacingAndGlyphs" stroke="#ffffff" stroke-width="3.4" stroke-linejoin="round">B</text>
<path d="M2424.5,168 A13.3,13.3 0 1 0 2438.9,168" fill="none" stroke="#fff" stroke-width="9"/>
<rect x="2426.4" y="154.8" width="10.3" height="27.4" rx="5" fill="#fff" stroke="#292929" stroke-width="2.5"/>
<text x="2295.30" y="236.50" font-size="34.88" fill="#ffffff" textLength="21.39" lengthAdjust="spacingAndGlyphs" stroke="#ffffff" stroke-width="0.6" >T</text>
<text x="2338.10" y="236.50" font-size="34.88" fill="#ffffff" textLength="19.61" lengthAdjust="spacingAndGlyphs" stroke="#ffffff" stroke-width="0.6" >e</text>
<text x="2382.30" y="236.50" font-size="34.88" fill="#ffffff" textLength="29.40" lengthAdjust="spacingAndGlyphs" stroke="#ffffff" stroke-width="0.6" >m</text>
<text x="2439.30" y="236.50" font-size="34.88" fill="#ffffff" textLength="20.41" lengthAdjust="spacingAndGlyphs" stroke="#ffffff" stroke-width="0.6" >p</text>
<text x="2481.80" y="236.50" font-size="34.88" fill="#ffffff" textLength="3.40" lengthAdjust="spacingAndGlyphs" stroke="#ffffff" stroke-width="0.6" >l</text>
<text x="2512.20" y="236.50" font-size="34.88" fill="#ffffff" textLength="18.47" lengthAdjust="spacingAndGlyphs" stroke="#ffffff" stroke-width="0.6" >a</text>
<text x="2554.10" y="236.50" font-size="34.88" fill="#ffffff" textLength="10.59" lengthAdjust="spacingAndGlyphs" stroke="#ffffff" stroke-width="0.6" >t</text>
<text x="2589.70" y="236.50" font-size="34.88" fill="#ffffff" textLength="20.01" lengthAdjust="spacingAndGlyphs" stroke="#ffffff" stroke-width="0.6" >e</text>
<text x="2632.30" y="236.50" font-size="34.88" fill="#ffffff" textLength="18.40" lengthAdjust="spacingAndGlyphs" stroke="#ffffff" stroke-width="0.6" >s</text>
<path d="M2851.5,254 L2857.5,260 L2863.5,254" fill="none" stroke="#e0e0e0" stroke-width="1.6"/>
<path d="M11,1670.4 H1868 a8,8 0 0 1 8,8 V1717.6 H11 Z" fill="#0b0b0b"/>
<path d="M2034,1670.4 H2890 V1717.6 H2026 V1678.4 a8,8 0 0 1 8,-8 Z" fill="#0b0b0b"/>
<rect x="11.00" y="1717.60" width="2879.50" height="1.00" fill="#333333" />
<rect x="11.00" y="1718.60" width="2879.50" height="32.20" fill="#161616" />
<path d="M54.5,1686 L47,1692.8 L54.5,1699.6" fill="none" stroke="#c8c8c8" stroke-width="1.5"/>
<path d="M96,1686 L103.5,1692.8 L96,1699.6" fill="none" stroke="#c8c8c8" stroke-width="1.5"/>
<circle cx="140.6" cy="1692.7" r="2.4" fill="#d0d0d0"/>
<circle cx="146.4" cy="1692.7" r="2.4" fill="#d0d0d0"/>
<circle cx="152.2" cy="1692.7" r="2.4" fill="#d0d0d0"/>
<rect x="177.1" y="1676.1" width="88.9" height="35.7" rx="7" fill="#ffeb70"/>
<text x="190.90" y="1702.60" font-size="20.64" fill="#161616" textLength="60.60" lengthAdjust="spacingAndGlyphs" >Payroll</text>
<line x1="272.50" y1="1680.00" x2="272.50" y2="1708.00" stroke="#4a4a4a" stroke-width="1" />
<rect x="279.2" y="1676.1" width="86.8" height="35.7" rx="7" fill="#ffeb70"/>
<text x="292.50" y="1702.60" font-size="20.64" fill="#161616" textLength="60.40" lengthAdjust="spacingAndGlyphs" >CAPEX</text>
<line x1="372.50" y1="1680.00" x2="372.50" y2="1708.00" stroke="#4a4a4a" stroke-width="1" />
<rect x="379.5" y="1676.1" width="112.4" height="35.7" rx="7" fill="#ffeb70"/>
<text x="391.60" y="1702.60" font-size="20.64" fill="#161616" textLength="86.40" lengthAdjust="spacingAndGlyphs" >CapTable</text>
<line x1="498.50" y1="1680.00" x2="498.50" y2="1708.00" stroke="#4a4a4a" stroke-width="1" />
<rect x="505.3" y="1676.1" width="89.7" height="35.7" rx="7" fill="#ffeb70"/>
<text x="517.50" y="1702.60" font-size="20.64" fill="#161616" textLength="64.90" lengthAdjust="spacingAndGlyphs" >Capital</text>
<line x1="601.50" y1="1680.00" x2="601.50" y2="1708.00" stroke="#4a4a4a" stroke-width="1" />
<rect x="608" y="1676.1" width="42.0" height="35.7" rx="7" fill="#4db3e6"/>
<text x="621.00" y="1702.60" font-size="20.64" fill="#161616" textLength="16.20" lengthAdjust="spacingAndGlyphs" >IS</text>
<line x1="656.50" y1="1680.00" x2="656.50" y2="1708.00" stroke="#4a4a4a" stroke-width="1" />
<rect x="662.7" y="1676.1" width="48.3" height="35.7" rx="7" fill="#4db3e6"/>
<text x="675.70" y="1702.60" font-size="20.64" fill="#161616" textLength="23.20" lengthAdjust="spacingAndGlyphs" >CF</text>
<line x1="717.50" y1="1680.00" x2="717.50" y2="1708.00" stroke="#4a4a4a" stroke-width="1" />
<rect x="724" y="1676.1" width="48.0" height="35.7" rx="7" fill="#4db3e6"/>
<text x="736.60" y="1702.60" font-size="20.64" fill="#161616" textLength="22.40" lengthAdjust="spacingAndGlyphs" >BS</text>
<line x1="778.50" y1="1680.00" x2="778.50" y2="1708.00" stroke="#4a4a4a" stroke-width="1" />
<rect x="785.3" y="1676.1" width="114.5" height="35.7" rx="7" fill="#4db3e6"/>
<text x="797.50" y="1702.60" font-size="20.64" fill="#161616" textLength="88.10" lengthAdjust="spacingAndGlyphs" >Scenarios</text>
<line x1="906.50" y1="1680.00" x2="906.50" y2="1708.00" stroke="#4a4a4a" stroke-width="1" />
<rect x="913" y="1676.1" width="114.8" height="35.7" rx="7" fill="#4db3e6"/>
<text x="926.40" y="1702.60" font-size="20.64" fill="#161616" textLength="87.20" lengthAdjust="spacingAndGlyphs" >Valuation</text>
<line x1="1034.50" y1="1680.00" x2="1034.50" y2="1708.00" stroke="#4a4a4a" stroke-width="1" />
<rect x="1040.8" y="1676.1" width="114.1" height="35.7" rx="7" fill="#4db3e6"/>
<text x="1055.00" y="1702.60" font-size="20.64" fill="#161616" textLength="87.30" lengthAdjust="spacingAndGlyphs" >Summary</text>
<line x1="1161.50" y1="1680.00" x2="1161.50" y2="1708.00" stroke="#4a4a4a" stroke-width="1" />
<rect x="1168.3" y="1676.1" width="47.4" height="35.7" rx="7" fill="#4db3e6"/>
<text x="1181.30" y="1702.60" font-size="20.64" fill="#161616" textLength="21.50" lengthAdjust="spacingAndGlyphs" >BE</text>
<line x1="1222.50" y1="1680.00" x2="1222.50" y2="1708.00" stroke="#4a4a4a" stroke-width="1" />
<rect x="1229" y="1676.1" width="71.6" height="35.7" rx="7" fill="#4db3e6"/>
<text x="1243.00" y="1702.60" font-size="20.64" fill="#161616" textLength="45.40" lengthAdjust="spacingAndGlyphs" >ROIC</text>
<line x1="1307.50" y1="1680.00" x2="1307.50" y2="1708.00" stroke="#4a4a4a" stroke-width="1" />
<rect x="1314" y="1676.1" width="84.8" height="35.7" rx="7" fill="#4db3e6"/>
<text x="1327.00" y="1702.60" font-size="20.64" fill="#161616" textLength="58.40" lengthAdjust="spacingAndGlyphs" >Charts</text>
<line x1="1405.50" y1="1680.00" x2="1405.50" y2="1708.00" stroke="#4a4a4a" stroke-width="1" />
<rect x="1412" y="1676.1" width="63.5" height="35.7" rx="7" fill="#4db3e6"/>
<text x="1425.60" y="1702.60" font-size="20.64" fill="#161616" textLength="37.40" lengthAdjust="spacingAndGlyphs" >KPIs</text>
<line x1="1482.50" y1="1680.00" x2="1482.50" y2="1708.00" stroke="#4a4a4a" stroke-width="1" />
<rect x="1488.9" y="1676.1" width="168.8" height="35.7" rx="7" fill="#4db3e6"/>
<text x="1501.50" y="1702.60" font-size="20.64" fill="#161616" textLength="143.20" lengthAdjust="spacingAndGlyphs" >Sources &amp; Uses</text>
<line x1="1664.50" y1="1680.00" x2="1664.50" y2="1708.00" stroke="#4a4a4a" stroke-width="1" />
<rect x="1671" y="1676.1" width="82.9" height="35.7" rx="7" fill="#4db3e6"/>
<text x="1684.50" y="1702.60" font-size="20.64" fill="#161616" textLength="55.50" lengthAdjust="spacingAndGlyphs" >Ratios</text>
<line x1="1760.50" y1="1680.00" x2="1760.50" y2="1708.00" stroke="#4a4a4a" stroke-width="1" />
<rect x="1767.3" y="1676.1" width="95.4" height="35.7" rx="7" fill="#4db3e6"/>
<text x="1780.70" y="1702.60" font-size="20.64" fill="#161616" textLength="68.20" lengthAdjust="spacingAndGlyphs" >DuPont</text>
<line x1="1869.50" y1="1680.00" x2="1869.50" y2="1708.00" stroke="#4a4a4a" stroke-width="1" />
<defs><linearGradient id="at" x1="0" y1="0" x2="0" y2="1"><stop offset="0" stop-color="#ffffff"/><stop offset="1" stop-color="#dbeef8"/></linearGradient></defs>
<path d="M1875.6,1672 V1704.5 a7,7 0 0 0 7,7 H2020 a7,7 0 0 0 7,-7 V1672 Z" fill="url(#at)"/>
<rect x="1875.60" y="1670.00" width="151.40" height="2.50" fill="#ffffff" />
<text x="1888.00" y="1697.50" font-size="20.64" fill="#161616" textLength="127.01" lengthAdjust="spacingAndGlyphs" >Top_Revenue</text>
<rect x="1887.60" y="1705.50" width="127.20" height="2.60" fill="#1f8a4c" />
<line x1="2033.50" y1="1680.00" x2="2033.50" y2="1708.00" stroke="#4a4a4a" stroke-width="1" />
<path d="M2047,1676.1 H2072 V1711.8 H2047 a7,7 0 0 1 -7,-7 V1683.1 a7,7 0 0 1 7,-7 Z" fill="#4db3e6"/>
<defs><clipPath id="tc"><rect x="2040" y="1670" width="32" height="50"/></clipPath></defs>
<text x="2054.00" y="1702.60" font-size="20.64" fill="#161616" textLength="24.00" lengthAdjust="spacingAndGlyphs" clip-path="url(#tc)">To</text>
<circle cx="2089.8" cy="1693" r="2.4" fill="#d8d8d8"/>
<circle cx="2095.5" cy="1693" r="2.4" fill="#d8d8d8"/>
<circle cx="2101.2" cy="1693" r="2.4" fill="#d8d8d8"/>
<path d="M2143,1685.5 V1700.5 M2135.5,1693 H2150.5" stroke="#e0e0e0" stroke-width="1.6"/>
<circle cx="2191.6" cy="1686.5" r="1.9" fill="#e0e0e0"/>
<circle cx="2191.6" cy="1693" r="1.9" fill="#e0e0e0"/>
<circle cx="2191.6" cy="1699.5" r="1.9" fill="#e0e0e0"/>
<rect x="2217" y="1680.6" width="643" height="25.4" rx="12.7" fill="#1a1a1a"/>
<path d="M2233.5,1686.5 L2225.5,1693.3 L2233.5,1700 Z" fill="#9a9a9a"/>
<path d="M2843.5,1686.5 L2851.5,1693.3 L2843.5,1700 Z" fill="#9a9a9a"/>
<rect x="2242" y="1687.8" width="508" height="11.2" rx="5.6" fill="#9b9b9b"/>
<text x="27.30" y="1741.00" font-size="16.42" fill="#e6e6e6" textLength="42.20" lengthAdjust="spacingAndGlyphs" >Ready</text>
<path d="M100,1745 V1727 H120.5 V1733 M100,1731 H120.5 M103,1735 H108 M103,1739 H107 M103,1743 H107" fill="none" stroke="#e6e6e6" stroke-width="1.5"/>
<circle cx="114.5" cy="1739.5" r="5.8" fill="#161616" stroke="#e6e6e6" stroke-width="1.6"/>
<circle cx="114.5" cy="1739.5" r="2.8" fill="#e6e6e6"/>
<circle cx="155.5" cy="1727.2" r="2.5" fill="none" stroke="#f0f0f0" stroke-width="1.7"/>
<path d="M147,1731 Q155.5,1736 164.5,1729.5 M155.5,1733.5 L154.5,1739 L150.5,1745 M155,1738.5 L159,1740.5" fill="none" stroke="#f0f0f0" stroke-width="2.1" stroke-linecap="round" stroke-linejoin="round"/>
<path d="M159.5,1739.5 L166.5,1746 M166.5,1739.5 L159.5,1746" stroke="#f0f0f0" stroke-width="1.6"/>
<text x="173.40" y="1741.00" font-size="16.72" fill="#ffffff" font-weight="bold" textLength="187.60" lengthAdjust="spacingAndGlyphs" >Accessibility: Investigate</text>
<rect x="2445.00" y="1718.60" width="60.00" height="32.20" fill="#242424" />
<rect x="2465.3" y="1725.4" width="17.6" height="17.2" fill="none" stroke="#fff" stroke-width="1.6"/>
<line x1="2471.20" y1="1725.40" x2="2471.20" y2="1742.60" stroke="#fff" stroke-width="1.4" />
<line x1="2477.10" y1="1725.40" x2="2477.10" y2="1742.60" stroke="#fff" stroke-width="1.4" />
<line x1="2465.30" y1="1731.10" x2="2482.90" y2="1731.10" stroke="#fff" stroke-width="1.4" />
<line x1="2465.30" y1="1736.90" x2="2482.90" y2="1736.90" stroke="#fff" stroke-width="1.4" />
<rect x="2525.5" y="1725.4" width="19.5" height="17.2" fill="none" stroke="#fff" stroke-width="1.6"/>
<rect x="2529.5" y="1728.5" width="11.5" height="11" fill="none" stroke="#fff" stroke-width="1.3"/>
<line x1="2531.50" y1="1732.50" x2="2539.00" y2="1732.50" stroke="#fff" stroke-width="1" />
<line x1="2531.50" y1="1735.50" x2="2539.00" y2="1735.50" stroke="#fff" stroke-width="1" />
<rect x="2585" y="1725.4" width="19.7" height="17.2" fill="none" stroke="#fff" stroke-width="1.6"/>
<path d="M2585,1737 H2597 V1725.4 M2591,1725.4 V1737" fill="none" stroke="#fff" stroke-width="1.4"/>
<line x1="2633.20" y1="1734.50" x2="2644.60" y2="1734.50" stroke="#d0d0d0" stroke-width="1.5" />
<line x1="2653.20" y1="1734.50" x2="2800.50" y2="1734.50" stroke="#bdbdbd" stroke-width="2.2" />
<line x1="2727.10" y1="1731.00" x2="2727.10" y2="1738.00" stroke="#bdbdbd" stroke-width="1.6" />
<rect x="2733.00" y="1726.00" width="7.80" height="17.00" fill="#c0c0c0" />
<path d="M2815,1728.8 V1740.2 M2809.3,1734.5 H2820.7" stroke="#d8d8d8" stroke-width="1.5"/>
<text x="2840.20" y="1741.00" font-size="15.99" fill="#e6e6e6" textLength="38.50" lengthAdjust="spacingAndGlyphs" >140%</text>
<rect x="2860" y="278" width="30" height="1392" rx="12" fill="#161616"/>
<path d="M2876,286 L2883,296 L2869,296 Z" fill="#9a9a9a" stroke="#9a9a9a" stroke-width="1.5" stroke-linejoin="round"/>
<rect x="2870" y="304" width="12" height="561.5" rx="6" fill="#9e9e9e"/>
<path d="M2869.5,1654 L2882.5,1654 L2876,1663.5 Z" fill="#9a9a9a" stroke="#9a9a9a" stroke-width="1.5" stroke-linejoin="round"/>
</svg></body></html>
